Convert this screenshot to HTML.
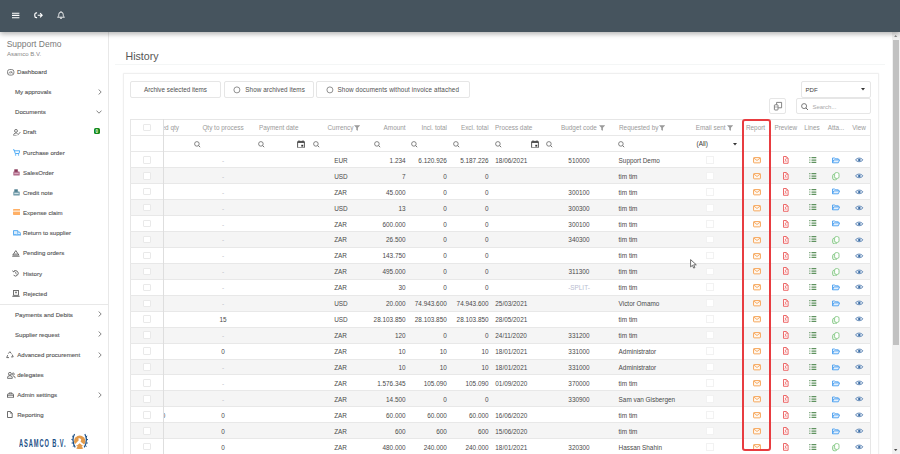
<!DOCTYPE html><html><head><meta charset="utf-8"><style>
html,body{margin:0;padding:0;width:900px;height:454px;overflow:hidden;background:#fff;font-family:"Liberation Sans", sans-serif;}
.t{position:absolute;white-space:nowrap;line-height:1;}
</style></head><body>
<div class="t" style="left:125.50px;top:51.03px;font-size:10.6px;color:#555;font-weight:normal;">History</div>
<div style="position:absolute;left:115px;top:64px;width:770px;height:1px;background:#f4f6f6"></div>
<div style="position:absolute;left:122.5px;top:73px;width:756px;height:400px;background:#fff;border:1px solid #efefef;border-radius:1px;box-sizing:border-box;box-shadow:0 0 1.5px rgba(0,0,0,0.07)"></div>
<div style="position:absolute;left:130px;top:81px;width:91px;height:17px;border:1px solid #e6e6e6;border-radius:2px;box-sizing:border-box;background:#fff"></div>
<div class="t" style="left:25.50px;width:300px;text-align:center;top:87.47px;font-size:6.3px;color:#505050;font-weight:normal;">Archive selected items</div>
<div style="position:absolute;left:223.5px;top:81px;width:90.0px;height:17px;border:1px solid #e6e6e6;border-radius:2px;box-sizing:border-box;background:#fff"></div>
<svg style="position:absolute;left:232.6px;top:85.8px" width="8" height="8" viewBox="0 0 8 8"><circle cx="3.9" cy="3.9" r="3" fill="none" stroke="#8a8a8a" stroke-width="0.95"/></svg>
<div class="t" style="left:245.30px;top:87.47px;font-size:6.3px;color:#505050;font-weight:normal;letter-spacing:0.08px">Show archived items</div>
<div style="position:absolute;left:316px;top:81px;width:153.5px;height:17px;border:1px solid #e6e6e6;border-radius:2px;box-sizing:border-box;background:#fff"></div>
<svg style="position:absolute;left:325.6px;top:85.8px" width="8" height="8" viewBox="0 0 8 8"><circle cx="3.9" cy="3.9" r="3" fill="none" stroke="#8a8a8a" stroke-width="0.95"/></svg>
<div class="t" style="left:337.50px;top:87.47px;font-size:6.3px;color:#505050;font-weight:normal;letter-spacing:0.11px">Show documents without invoice attached</div>
<div style="position:absolute;left:800.5px;top:81px;width:70.0px;height:16.5px;border:1px solid #e6e6e6;border-radius:2px;box-sizing:border-box;background:#fff"></div>
<div class="t" style="left:805.50px;top:86.84px;font-size:6.1px;color:#444;font-weight:normal;">PDF</div>
<svg style="position:absolute;left:861px;top:88.3px" width="4" height="3" viewBox="0 0 4 3"><path d="M0 0H4L2 2.4Z" fill="#333"/></svg>
<div style="position:absolute;left:769.4px;top:98.3px;width:17.0px;height:16.200000000000003px;border:1px solid #e6e6e6;border-radius:2px;box-sizing:border-box;background:#fff"></div>
<svg style="position:absolute;left:773px;top:101px" width="10" height="10" viewBox="0 0 10 10"><rect x="1.4" y="3.8" width="3.6" height="5.2" rx="0.6" fill="none" stroke="#666" stroke-width="0.8"/><path d="M3.6 3.6V1.4H8.6V6.8H5.2" fill="none" stroke="#666" stroke-width="0.8"/><path d="M1.6 6H4.8" stroke="#777" stroke-width="0.6"/></svg>
<div style="position:absolute;left:796px;top:98.2px;width:74.5px;height:16.099999999999994px;border:1px solid #e6e6e6;border-radius:2px;box-sizing:border-box;background:#fff"></div>
<svg style="position:absolute;left:800.5px;top:102.6px" width="8" height="8" viewBox="0 0 8 8"><circle cx="3.1" cy="3.1" r="2.5" fill="none" stroke="#666" stroke-width="0.85"/><path d="M4.9 4.9L7 7" stroke="#666" stroke-width="0.95"/></svg>
<div class="t" style="left:812.40px;top:103.92px;font-size:6.0px;color:#aaa;font-weight:normal;">Search...</div>
<div style="position:absolute;left:130px;top:119px;width:740.5px;height:335px;border:1px solid #e6e6e6;border-bottom:none;box-sizing:border-box;background:#fff"></div>
<div style="position:absolute;left:130px;top:135.3px;width:740.5px;height:1px;background:#e8e8e8"></div>
<div style="position:absolute;left:130px;top:151.3px;width:740.5px;height:1px;background:#e8e8e8"></div>
<div style="position:absolute;left:130px;top:167.24px;width:740.5px;height:1px;background:#e8e8e8"></div>
<div style="position:absolute;left:131px;top:168.24px;width:738.5px;height:14.94px;background:#f5f5f5"></div>
<div style="position:absolute;left:130px;top:183.18px;width:740.5px;height:1px;background:#e8e8e8"></div>
<div style="position:absolute;left:130px;top:199.12px;width:740.5px;height:1px;background:#e8e8e8"></div>
<div style="position:absolute;left:131px;top:200.12px;width:738.5px;height:14.94px;background:#f5f5f5"></div>
<div style="position:absolute;left:130px;top:215.06px;width:740.5px;height:1px;background:#e8e8e8"></div>
<div style="position:absolute;left:130px;top:231.0px;width:740.5px;height:1px;background:#e8e8e8"></div>
<div style="position:absolute;left:131px;top:232.0px;width:738.5px;height:14.94px;background:#f5f5f5"></div>
<div style="position:absolute;left:130px;top:246.94px;width:740.5px;height:1px;background:#e8e8e8"></div>
<div style="position:absolute;left:130px;top:262.88px;width:740.5px;height:1px;background:#e8e8e8"></div>
<div style="position:absolute;left:131px;top:263.88px;width:738.5px;height:14.94px;background:#f5f5f5"></div>
<div style="position:absolute;left:130px;top:278.82px;width:740.5px;height:1px;background:#e8e8e8"></div>
<div style="position:absolute;left:130px;top:294.76px;width:740.5px;height:1px;background:#e8e8e8"></div>
<div style="position:absolute;left:131px;top:295.76px;width:738.5px;height:14.94px;background:#f5f5f5"></div>
<div style="position:absolute;left:130px;top:310.7px;width:740.5px;height:1px;background:#e8e8e8"></div>
<div style="position:absolute;left:130px;top:326.64000000000004px;width:740.5px;height:1px;background:#e8e8e8"></div>
<div style="position:absolute;left:131px;top:327.64px;width:738.5px;height:14.94px;background:#f5f5f5"></div>
<div style="position:absolute;left:130px;top:342.58px;width:740.5px;height:1px;background:#e8e8e8"></div>
<div style="position:absolute;left:130px;top:358.52000000000004px;width:740.5px;height:1px;background:#e8e8e8"></div>
<div style="position:absolute;left:131px;top:359.52px;width:738.5px;height:14.94px;background:#f5f5f5"></div>
<div style="position:absolute;left:130px;top:374.46px;width:740.5px;height:1px;background:#e8e8e8"></div>
<div style="position:absolute;left:130px;top:390.40000000000003px;width:740.5px;height:1px;background:#e8e8e8"></div>
<div style="position:absolute;left:131px;top:391.4px;width:738.5px;height:14.94px;background:#f5f5f5"></div>
<div style="position:absolute;left:130px;top:406.34px;width:740.5px;height:1px;background:#e8e8e8"></div>
<div style="position:absolute;left:130px;top:422.28000000000003px;width:740.5px;height:1px;background:#e8e8e8"></div>
<div style="position:absolute;left:131px;top:423.28000000000003px;width:738.5px;height:14.94px;background:#f5f5f5"></div>
<div style="position:absolute;left:130px;top:438.22px;width:740.5px;height:1px;background:#e8e8e8"></div>
<div style="position:absolute;left:130px;top:454.16px;width:740.5px;height:1px;background:#e8e8e8"></div>
<div style="position:absolute;left:163px;top:119px;width:1px;height:335px;background:#dedede"></div>
<div style="position:absolute;left:143px;top:123.5px;width:7.5px;height:7.5px;border:1px solid #e9e9e9;border-radius:1px;box-sizing:border-box;background:#fff"></div>
<div style="position:absolute;left:164px;top:125.28px;width:20px;overflow:hidden;height:8px"><div class="t" style="left:-2.5px;top:0;font-size:6.4px;color:#9a9a9a">ed qty</div></div>
<div class="t" style="left:73.00px;width:300px;text-align:center;top:125.28px;font-size:6.4px;color:#9a9a9a;font-weight:normal;">Qty to process</div>
<div class="t" style="left:259.00px;top:125.28px;font-size:6.4px;color:#9a9a9a;font-weight:normal;">Payment date</div>
<div class="t" style="left:327.50px;top:125.28px;font-size:6.4px;color:#9a9a9a;font-weight:normal;">Currency</div>
<svg style="position:absolute;left:354.3px;top:125px" width="6" height="6" viewBox="0 0 6 6"><path d="M0 0.3H6.2L3.9 2.8V5.8L2.3 5V2.8Z" fill="#9a9a9a"/></svg>
<div class="t" style="left:105.60px;width:300px;text-align:right;top:125.28px;font-size:6.4px;color:#9a9a9a;font-weight:normal;">Amount</div>
<div class="t" style="left:147.00px;width:300px;text-align:right;top:125.28px;font-size:6.4px;color:#9a9a9a;font-weight:normal;">Incl. total</div>
<div class="t" style="left:188.60px;width:300px;text-align:right;top:125.28px;font-size:6.4px;color:#9a9a9a;font-weight:normal;">Excl. total</div>
<div class="t" style="left:495.00px;top:125.28px;font-size:6.4px;color:#9a9a9a;font-weight:normal;">Process date</div>
<div class="t" style="left:561.00px;top:125.28px;font-size:6.4px;color:#9a9a9a;font-weight:normal;">Budget code</div>
<svg style="position:absolute;left:598.8px;top:125px" width="6" height="6" viewBox="0 0 6 6"><path d="M0 0.3H6.2L3.9 2.8V5.8L2.3 5V2.8Z" fill="#9a9a9a"/></svg>
<div class="t" style="left:619.00px;top:125.28px;font-size:6.4px;color:#9a9a9a;font-weight:normal;">Requested by</div>
<svg style="position:absolute;left:658.8px;top:125px" width="6" height="6" viewBox="0 0 6 6"><path d="M0 0.3H6.2L3.9 2.8V5.8L2.3 5V2.8Z" fill="#9a9a9a"/></svg>
<div class="t" style="left:695.70px;top:125.28px;font-size:6.4px;color:#9a9a9a;font-weight:normal;">Email sent</div>
<svg style="position:absolute;left:727.3px;top:125px" width="6" height="6" viewBox="0 0 6 6"><path d="M0 0.3H6.2L3.9 2.8V5.8L2.3 5V2.8Z" fill="#9a9a9a"/></svg>
<div class="t" style="left:605.50px;width:300px;text-align:center;top:125.28px;font-size:6.4px;color:#9a9a9a;font-weight:normal;">Report</div>
<div class="t" style="left:635.80px;width:300px;text-align:center;top:125.28px;font-size:6.4px;color:#9a9a9a;font-weight:normal;">Preview</div>
<div class="t" style="left:662.00px;width:300px;text-align:center;top:125.28px;font-size:6.4px;color:#9a9a9a;font-weight:normal;">Lines</div>
<div class="t" style="left:686.00px;width:300px;text-align:center;top:125.28px;font-size:6.4px;color:#9a9a9a;font-weight:normal;">Atta...</div>
<div class="t" style="left:709.00px;width:300px;text-align:center;top:125.28px;font-size:6.4px;color:#9a9a9a;font-weight:normal;">View</div>
<svg style="position:absolute;left:193.5px;top:140.6px" width="7" height="7" viewBox="0 0 7 7"><circle cx="2.9" cy="2.9" r="2.3" fill="none" stroke="#666" stroke-width="0.8"/><path d="M4.6 4.6L6.2 6.2" stroke="#666" stroke-width="0.9"/></svg>
<svg style="position:absolute;left:258.0px;top:140.6px" width="7" height="7" viewBox="0 0 7 7"><circle cx="2.9" cy="2.9" r="2.3" fill="none" stroke="#666" stroke-width="0.8"/><path d="M4.6 4.6L6.2 6.2" stroke="#666" stroke-width="0.9"/></svg>
<svg style="position:absolute;left:297.1px;top:139.6px" width="8" height="8.5" viewBox="0 0 8 8.5"><rect x="0.6" y="1.4" width="6.8" height="6.5" rx="0.7" fill="none" stroke="#444" stroke-width="0.9"/><rect x="0.6" y="1.4" width="6.8" height="1.5" fill="#444"/><rect x="4.3" y="4.8" width="1.9" height="1.8" fill="#333"/><path d="M2 0.3V1.6M6 0.3V1.6" stroke="#444" stroke-width="0.8"/></svg>
<svg style="position:absolute;left:312.5px;top:140.6px" width="7" height="7" viewBox="0 0 7 7"><circle cx="2.9" cy="2.9" r="2.3" fill="none" stroke="#666" stroke-width="0.8"/><path d="M4.6 4.6L6.2 6.2" stroke="#666" stroke-width="0.9"/></svg>
<svg style="position:absolute;left:373.5px;top:140.6px" width="7" height="7" viewBox="0 0 7 7"><circle cx="2.9" cy="2.9" r="2.3" fill="none" stroke="#666" stroke-width="0.8"/><path d="M4.6 4.6L6.2 6.2" stroke="#666" stroke-width="0.9"/></svg>
<svg style="position:absolute;left:411.0px;top:140.6px" width="7" height="7" viewBox="0 0 7 7"><circle cx="2.9" cy="2.9" r="2.3" fill="none" stroke="#666" stroke-width="0.8"/><path d="M4.6 4.6L6.2 6.2" stroke="#666" stroke-width="0.9"/></svg>
<svg style="position:absolute;left:452.5px;top:140.6px" width="7" height="7" viewBox="0 0 7 7"><circle cx="2.9" cy="2.9" r="2.3" fill="none" stroke="#666" stroke-width="0.8"/><path d="M4.6 4.6L6.2 6.2" stroke="#666" stroke-width="0.9"/></svg>
<svg style="position:absolute;left:494.5px;top:140.6px" width="7" height="7" viewBox="0 0 7 7"><circle cx="2.9" cy="2.9" r="2.3" fill="none" stroke="#666" stroke-width="0.8"/><path d="M4.6 4.6L6.2 6.2" stroke="#666" stroke-width="0.9"/></svg>
<svg style="position:absolute;left:530.6px;top:139.6px" width="8" height="8.5" viewBox="0 0 8 8.5"><rect x="0.6" y="1.4" width="6.8" height="6.5" rx="0.7" fill="none" stroke="#444" stroke-width="0.9"/><rect x="0.6" y="1.4" width="6.8" height="1.5" fill="#444"/><rect x="4.3" y="4.8" width="1.9" height="1.8" fill="#333"/><path d="M2 0.3V1.6M6 0.3V1.6" stroke="#444" stroke-width="0.8"/></svg>
<svg style="position:absolute;left:545.5px;top:140.6px" width="7" height="7" viewBox="0 0 7 7"><circle cx="2.9" cy="2.9" r="2.3" fill="none" stroke="#666" stroke-width="0.8"/><path d="M4.6 4.6L6.2 6.2" stroke="#666" stroke-width="0.9"/></svg>
<svg style="position:absolute;left:617.5px;top:140.6px" width="7" height="7" viewBox="0 0 7 7"><circle cx="2.9" cy="2.9" r="2.3" fill="none" stroke="#666" stroke-width="0.8"/><path d="M4.6 4.6L6.2 6.2" stroke="#666" stroke-width="0.9"/></svg>
<div class="t" style="left:696.50px;top:141.08px;font-size:6.4px;color:#333;font-weight:normal;">(All)</div>
<svg style="position:absolute;left:733px;top:142.8px" width="4" height="3" viewBox="0 0 4 3"><path d="M0 0H4L2 2.4Z" fill="#333"/></svg>
<div style="position:absolute;left:143px;top:156.07px;width:7.5px;height:7.5px;border:1px solid #e9e9e9;border-radius:1px;box-sizing:border-box;background:#fff"></div>
<div class="t" style="left:73.00px;width:300px;text-align:center;top:157.78px;font-size:6.4px;color:#c0c0c8;font-weight:normal;">-</div>
<div class="t" style="left:334.20px;top:157.78px;font-size:6.4px;color:#4a4a4a;font-weight:normal;">EUR</div>
<div class="t" style="left:105.60px;width:300px;text-align:right;top:157.78px;font-size:6.4px;color:#4a4a4a;font-weight:normal;">1.234</div>
<div class="t" style="left:146.80px;width:300px;text-align:right;top:157.78px;font-size:6.4px;color:#4a4a4a;font-weight:normal;">6.120.926</div>
<div class="t" style="left:188.60px;width:300px;text-align:right;top:157.78px;font-size:6.4px;color:#4a4a4a;font-weight:normal;">5.187.226</div>
<div class="t" style="left:495.30px;top:157.78px;font-size:6.4px;color:#4a4a4a;font-weight:normal;">18/06/2021</div>
<div class="t" style="left:429.00px;width:300px;text-align:center;top:157.78px;font-size:6.4px;color:#4a4a4a;font-weight:normal;">510000</div>
<div class="t" style="left:618.60px;top:157.78px;font-size:6.4px;color:#4a4a4a;font-weight:normal;">Support Demo</div>
<div style="position:absolute;left:706px;top:155.97px;width:7.8px;height:7.8px;border:1px solid #f2f2f2;box-sizing:border-box;background:#fff"></div>
<svg style="position:absolute;left:752.5px;top:156.87px" width="8" height="7" viewBox="0 0 8 7"><rect x="0.55" y="0.55" width="6.9" height="5.3" rx="0.6" fill="#fff8f0" stroke="#f6a456" stroke-width="0.95"/><path d="M0.9 1.1L4 3.5L7.1 1.1" fill="none" stroke="#f6a456" stroke-width="0.9"/></svg>
<svg style="position:absolute;left:782.5px;top:155.87px" width="6" height="8" viewBox="0 0 6 8"><path d="M0.5 0.5H3.3L5.1 2.3V7.3H0.5Z" fill="#fff" stroke="#ea5050" stroke-width="0.85" stroke-linejoin="round"/><path d="M3.2 0.6V2.4H5" fill="none" stroke="#ea5050" stroke-width="0.6"/><path d="M1.8 6C2.4 4.8 2.8 3.8 2.7 3.1C2.6 2.7 2.1 2.9 2.3 3.6C2.6 4.6 3.4 5.4 4 5.5" fill="none" stroke="#ea5050" stroke-width="0.55"/></svg>
<svg style="position:absolute;left:808.6px;top:157px" width="8" height="7" viewBox="0 0 8 7"><path d="M0.3 0.6H1.4M0.3 3H1.4M0.3 5.4H1.4" stroke="#5a8f5a" stroke-width="1.2"/><path d="M2.5 0.6H7.3M2.5 3H7.3M2.5 5.4H7.3" stroke="#5f925f" stroke-width="1.25"/></svg>
<svg style="position:absolute;left:831.5px;top:156.57px" width="8" height="7" viewBox="0 0 8 7"><path d="M0.5 5.8V1H2.8L3.6 1.8H6.3V2.8" fill="none" stroke="#4a9ff0" stroke-width="0.9"/><path d="M0.5 5.8L1.8 2.9H7.6L6.3 5.8Z" fill="#e3f0fd" stroke="#4a9ff0" stroke-width="0.9"/></svg>
<svg style="position:absolute;left:854.7px;top:156.97px" width="9" height="6" viewBox="0 0 9 6"><path d="M0.5 2.9C2.1 0.5 6.3 0.5 7.9 2.9C6.3 5.3 2.1 5.3 0.5 2.9Z" fill="#e8eef6" stroke="#4573aa" stroke-width="0.8"/><circle cx="4.3" cy="2.9" r="1.25" fill="#3f6fa6"/></svg>
<div style="position:absolute;left:143px;top:172.01px;width:7.5px;height:7.5px;border:1px solid #e9e9e9;border-radius:1px;box-sizing:border-box;background:#fff"></div>
<div class="t" style="left:73.00px;width:300px;text-align:center;top:173.72px;font-size:6.4px;color:#c0c0c8;font-weight:normal;">-</div>
<div class="t" style="left:334.20px;top:173.72px;font-size:6.4px;color:#4a4a4a;font-weight:normal;">USD</div>
<div class="t" style="left:105.60px;width:300px;text-align:right;top:173.72px;font-size:6.4px;color:#4a4a4a;font-weight:normal;">7</div>
<div class="t" style="left:146.80px;width:300px;text-align:right;top:173.72px;font-size:6.4px;color:#4a4a4a;font-weight:normal;">0</div>
<div class="t" style="left:188.60px;width:300px;text-align:right;top:173.72px;font-size:6.4px;color:#4a4a4a;font-weight:normal;">0</div>
<div class="t" style="left:618.60px;top:173.72px;font-size:6.4px;color:#4a4a4a;font-weight:normal;">tim tim</div>
<div style="position:absolute;left:706px;top:171.91px;width:7.8px;height:7.8px;border:1px solid #f2f2f2;box-sizing:border-box;background:#fff"></div>
<svg style="position:absolute;left:752.5px;top:172.81px" width="8" height="7" viewBox="0 0 8 7"><rect x="0.55" y="0.55" width="6.9" height="5.3" rx="0.6" fill="#fff8f0" stroke="#f6a456" stroke-width="0.95"/><path d="M0.9 1.1L4 3.5L7.1 1.1" fill="none" stroke="#f6a456" stroke-width="0.9"/></svg>
<svg style="position:absolute;left:782.5px;top:171.81px" width="6" height="8" viewBox="0 0 6 8"><path d="M0.5 0.5H3.3L5.1 2.3V7.3H0.5Z" fill="#fff" stroke="#ea5050" stroke-width="0.85" stroke-linejoin="round"/><path d="M3.2 0.6V2.4H5" fill="none" stroke="#ea5050" stroke-width="0.6"/><path d="M1.8 6C2.4 4.8 2.8 3.8 2.7 3.1C2.6 2.7 2.1 2.9 2.3 3.6C2.6 4.6 3.4 5.4 4 5.5" fill="none" stroke="#ea5050" stroke-width="0.55"/></svg>
<svg style="position:absolute;left:808.6px;top:173px" width="8" height="7" viewBox="0 0 8 7"><path d="M0.3 0.6H1.4M0.3 3H1.4M0.3 5.4H1.4" stroke="#5a8f5a" stroke-width="1.2"/><path d="M2.5 0.6H7.3M2.5 3H7.3M2.5 5.4H7.3" stroke="#5f925f" stroke-width="1.25"/></svg>
<svg style="position:absolute;left:831.5px;top:172.11px" width="8" height="8.5" viewBox="0 0 8 8.5"><rect x="0.6" y="2.2" width="4.4" height="5.6" rx="1.6" fill="#e6f4e6" stroke="#86c886" stroke-width="0.9"/><rect x="2.6" y="0.6" width="4.4" height="5.8" rx="1.6" fill="#fff" stroke="#86c886" stroke-width="0.9"/></svg>
<svg style="position:absolute;left:854.7px;top:172.91px" width="9" height="6" viewBox="0 0 9 6"><path d="M0.5 2.9C2.1 0.5 6.3 0.5 7.9 2.9C6.3 5.3 2.1 5.3 0.5 2.9Z" fill="#e8eef6" stroke="#4573aa" stroke-width="0.8"/><circle cx="4.3" cy="2.9" r="1.25" fill="#3f6fa6"/></svg>
<div style="position:absolute;left:143px;top:187.95px;width:7.5px;height:7.5px;border:1px solid #e9e9e9;border-radius:1px;box-sizing:border-box;background:#fff"></div>
<div class="t" style="left:73.00px;width:300px;text-align:center;top:189.66px;font-size:6.4px;color:#c0c0c8;font-weight:normal;">-</div>
<div class="t" style="left:334.20px;top:189.66px;font-size:6.4px;color:#4a4a4a;font-weight:normal;">ZAR</div>
<div class="t" style="left:105.60px;width:300px;text-align:right;top:189.66px;font-size:6.4px;color:#4a4a4a;font-weight:normal;">45.000</div>
<div class="t" style="left:146.80px;width:300px;text-align:right;top:189.66px;font-size:6.4px;color:#4a4a4a;font-weight:normal;">0</div>
<div class="t" style="left:188.60px;width:300px;text-align:right;top:189.66px;font-size:6.4px;color:#4a4a4a;font-weight:normal;">0</div>
<div class="t" style="left:429.00px;width:300px;text-align:center;top:189.66px;font-size:6.4px;color:#4a4a4a;font-weight:normal;">300100</div>
<div class="t" style="left:618.60px;top:189.66px;font-size:6.4px;color:#4a4a4a;font-weight:normal;">tim tim</div>
<div style="position:absolute;left:706px;top:187.85px;width:7.8px;height:7.8px;border:1px solid #f2f2f2;box-sizing:border-box;background:#fff"></div>
<svg style="position:absolute;left:752.5px;top:188.75px" width="8" height="7" viewBox="0 0 8 7"><rect x="0.55" y="0.55" width="6.9" height="5.3" rx="0.6" fill="#fff8f0" stroke="#f6a456" stroke-width="0.95"/><path d="M0.9 1.1L4 3.5L7.1 1.1" fill="none" stroke="#f6a456" stroke-width="0.9"/></svg>
<svg style="position:absolute;left:782.5px;top:187.75px" width="6" height="8" viewBox="0 0 6 8"><path d="M0.5 0.5H3.3L5.1 2.3V7.3H0.5Z" fill="#fff" stroke="#ea5050" stroke-width="0.85" stroke-linejoin="round"/><path d="M3.2 0.6V2.4H5" fill="none" stroke="#ea5050" stroke-width="0.6"/><path d="M1.8 6C2.4 4.8 2.8 3.8 2.7 3.1C2.6 2.7 2.1 2.9 2.3 3.6C2.6 4.6 3.4 5.4 4 5.5" fill="none" stroke="#ea5050" stroke-width="0.55"/></svg>
<svg style="position:absolute;left:808.6px;top:189px" width="8" height="7" viewBox="0 0 8 7"><path d="M0.3 0.6H1.4M0.3 3H1.4M0.3 5.4H1.4" stroke="#5a8f5a" stroke-width="1.2"/><path d="M2.5 0.6H7.3M2.5 3H7.3M2.5 5.4H7.3" stroke="#5f925f" stroke-width="1.25"/></svg>
<svg style="position:absolute;left:831.5px;top:188.45px" width="8" height="7" viewBox="0 0 8 7"><path d="M0.5 5.8V1H2.8L3.6 1.8H6.3V2.8" fill="none" stroke="#4a9ff0" stroke-width="0.9"/><path d="M0.5 5.8L1.8 2.9H7.6L6.3 5.8Z" fill="#e3f0fd" stroke="#4a9ff0" stroke-width="0.9"/></svg>
<svg style="position:absolute;left:854.7px;top:188.85px" width="9" height="6" viewBox="0 0 9 6"><path d="M0.5 2.9C2.1 0.5 6.3 0.5 7.9 2.9C6.3 5.3 2.1 5.3 0.5 2.9Z" fill="#e8eef6" stroke="#4573aa" stroke-width="0.8"/><circle cx="4.3" cy="2.9" r="1.25" fill="#3f6fa6"/></svg>
<div style="position:absolute;left:143px;top:203.89px;width:7.5px;height:7.5px;border:1px solid #e9e9e9;border-radius:1px;box-sizing:border-box;background:#fff"></div>
<div class="t" style="left:73.00px;width:300px;text-align:center;top:205.60px;font-size:6.4px;color:#c0c0c8;font-weight:normal;">-</div>
<div class="t" style="left:334.20px;top:205.60px;font-size:6.4px;color:#4a4a4a;font-weight:normal;">USD</div>
<div class="t" style="left:105.60px;width:300px;text-align:right;top:205.60px;font-size:6.4px;color:#4a4a4a;font-weight:normal;">13</div>
<div class="t" style="left:146.80px;width:300px;text-align:right;top:205.60px;font-size:6.4px;color:#4a4a4a;font-weight:normal;">0</div>
<div class="t" style="left:188.60px;width:300px;text-align:right;top:205.60px;font-size:6.4px;color:#4a4a4a;font-weight:normal;">0</div>
<div class="t" style="left:429.00px;width:300px;text-align:center;top:205.60px;font-size:6.4px;color:#4a4a4a;font-weight:normal;">300300</div>
<div class="t" style="left:618.60px;top:205.60px;font-size:6.4px;color:#4a4a4a;font-weight:normal;">tim tim</div>
<div style="position:absolute;left:706px;top:203.79px;width:7.8px;height:7.8px;border:1px solid #f2f2f2;box-sizing:border-box;background:#fff"></div>
<svg style="position:absolute;left:752.5px;top:204.69px" width="8" height="7" viewBox="0 0 8 7"><rect x="0.55" y="0.55" width="6.9" height="5.3" rx="0.6" fill="#fff8f0" stroke="#f6a456" stroke-width="0.95"/><path d="M0.9 1.1L4 3.5L7.1 1.1" fill="none" stroke="#f6a456" stroke-width="0.9"/></svg>
<svg style="position:absolute;left:782.5px;top:203.69px" width="6" height="8" viewBox="0 0 6 8"><path d="M0.5 0.5H3.3L5.1 2.3V7.3H0.5Z" fill="#fff" stroke="#ea5050" stroke-width="0.85" stroke-linejoin="round"/><path d="M3.2 0.6V2.4H5" fill="none" stroke="#ea5050" stroke-width="0.6"/><path d="M1.8 6C2.4 4.8 2.8 3.8 2.7 3.1C2.6 2.7 2.1 2.9 2.3 3.6C2.6 4.6 3.4 5.4 4 5.5" fill="none" stroke="#ea5050" stroke-width="0.55"/></svg>
<svg style="position:absolute;left:808.6px;top:204px" width="8" height="7" viewBox="0 0 8 7"><path d="M0.3 0.6H1.4M0.3 3H1.4M0.3 5.4H1.4" stroke="#5a8f5a" stroke-width="1.2"/><path d="M2.5 0.6H7.3M2.5 3H7.3M2.5 5.4H7.3" stroke="#5f925f" stroke-width="1.25"/></svg>
<svg style="position:absolute;left:831.5px;top:204.39px" width="8" height="7" viewBox="0 0 8 7"><path d="M0.5 5.8V1H2.8L3.6 1.8H6.3V2.8" fill="none" stroke="#4a9ff0" stroke-width="0.9"/><path d="M0.5 5.8L1.8 2.9H7.6L6.3 5.8Z" fill="#e3f0fd" stroke="#4a9ff0" stroke-width="0.9"/></svg>
<svg style="position:absolute;left:854.7px;top:204.79px" width="9" height="6" viewBox="0 0 9 6"><path d="M0.5 2.9C2.1 0.5 6.3 0.5 7.9 2.9C6.3 5.3 2.1 5.3 0.5 2.9Z" fill="#e8eef6" stroke="#4573aa" stroke-width="0.8"/><circle cx="4.3" cy="2.9" r="1.25" fill="#3f6fa6"/></svg>
<div style="position:absolute;left:143px;top:219.83px;width:7.5px;height:7.5px;border:1px solid #e9e9e9;border-radius:1px;box-sizing:border-box;background:#fff"></div>
<div class="t" style="left:73.00px;width:300px;text-align:center;top:221.54px;font-size:6.4px;color:#c0c0c8;font-weight:normal;">-</div>
<div class="t" style="left:334.20px;top:221.54px;font-size:6.4px;color:#4a4a4a;font-weight:normal;">ZAR</div>
<div class="t" style="left:105.60px;width:300px;text-align:right;top:221.54px;font-size:6.4px;color:#4a4a4a;font-weight:normal;">600.000</div>
<div class="t" style="left:146.80px;width:300px;text-align:right;top:221.54px;font-size:6.4px;color:#4a4a4a;font-weight:normal;">0</div>
<div class="t" style="left:188.60px;width:300px;text-align:right;top:221.54px;font-size:6.4px;color:#4a4a4a;font-weight:normal;">0</div>
<div class="t" style="left:429.00px;width:300px;text-align:center;top:221.54px;font-size:6.4px;color:#4a4a4a;font-weight:normal;">300100</div>
<div class="t" style="left:618.60px;top:221.54px;font-size:6.4px;color:#4a4a4a;font-weight:normal;">tim tim</div>
<div style="position:absolute;left:706px;top:219.73px;width:7.8px;height:7.8px;border:1px solid #f2f2f2;box-sizing:border-box;background:#fff"></div>
<svg style="position:absolute;left:752.5px;top:220.63px" width="8" height="7" viewBox="0 0 8 7"><rect x="0.55" y="0.55" width="6.9" height="5.3" rx="0.6" fill="#fff8f0" stroke="#f6a456" stroke-width="0.95"/><path d="M0.9 1.1L4 3.5L7.1 1.1" fill="none" stroke="#f6a456" stroke-width="0.9"/></svg>
<svg style="position:absolute;left:782.5px;top:219.63px" width="6" height="8" viewBox="0 0 6 8"><path d="M0.5 0.5H3.3L5.1 2.3V7.3H0.5Z" fill="#fff" stroke="#ea5050" stroke-width="0.85" stroke-linejoin="round"/><path d="M3.2 0.6V2.4H5" fill="none" stroke="#ea5050" stroke-width="0.6"/><path d="M1.8 6C2.4 4.8 2.8 3.8 2.7 3.1C2.6 2.7 2.1 2.9 2.3 3.6C2.6 4.6 3.4 5.4 4 5.5" fill="none" stroke="#ea5050" stroke-width="0.55"/></svg>
<svg style="position:absolute;left:808.6px;top:220px" width="8" height="7" viewBox="0 0 8 7"><path d="M0.3 0.6H1.4M0.3 3H1.4M0.3 5.4H1.4" stroke="#5a8f5a" stroke-width="1.2"/><path d="M2.5 0.6H7.3M2.5 3H7.3M2.5 5.4H7.3" stroke="#5f925f" stroke-width="1.25"/></svg>
<svg style="position:absolute;left:831.5px;top:220.33px" width="8" height="7" viewBox="0 0 8 7"><path d="M0.5 5.8V1H2.8L3.6 1.8H6.3V2.8" fill="none" stroke="#4a9ff0" stroke-width="0.9"/><path d="M0.5 5.8L1.8 2.9H7.6L6.3 5.8Z" fill="#e3f0fd" stroke="#4a9ff0" stroke-width="0.9"/></svg>
<svg style="position:absolute;left:854.7px;top:220.73px" width="9" height="6" viewBox="0 0 9 6"><path d="M0.5 2.9C2.1 0.5 6.3 0.5 7.9 2.9C6.3 5.3 2.1 5.3 0.5 2.9Z" fill="#e8eef6" stroke="#4573aa" stroke-width="0.8"/><circle cx="4.3" cy="2.9" r="1.25" fill="#3f6fa6"/></svg>
<div style="position:absolute;left:143px;top:235.77px;width:7.5px;height:7.5px;border:1px solid #e9e9e9;border-radius:1px;box-sizing:border-box;background:#fff"></div>
<div class="t" style="left:73.00px;width:300px;text-align:center;top:237.48px;font-size:6.4px;color:#c0c0c8;font-weight:normal;">-</div>
<div class="t" style="left:334.20px;top:237.48px;font-size:6.4px;color:#4a4a4a;font-weight:normal;">ZAR</div>
<div class="t" style="left:105.60px;width:300px;text-align:right;top:237.48px;font-size:6.4px;color:#4a4a4a;font-weight:normal;">26.500</div>
<div class="t" style="left:146.80px;width:300px;text-align:right;top:237.48px;font-size:6.4px;color:#4a4a4a;font-weight:normal;">0</div>
<div class="t" style="left:188.60px;width:300px;text-align:right;top:237.48px;font-size:6.4px;color:#4a4a4a;font-weight:normal;">0</div>
<div class="t" style="left:429.00px;width:300px;text-align:center;top:237.48px;font-size:6.4px;color:#4a4a4a;font-weight:normal;">340300</div>
<div class="t" style="left:618.60px;top:237.48px;font-size:6.4px;color:#4a4a4a;font-weight:normal;">tim tim</div>
<div style="position:absolute;left:706px;top:235.67px;width:7.8px;height:7.8px;border:1px solid #f2f2f2;box-sizing:border-box;background:#fff"></div>
<svg style="position:absolute;left:752.5px;top:236.57px" width="8" height="7" viewBox="0 0 8 7"><rect x="0.55" y="0.55" width="6.9" height="5.3" rx="0.6" fill="#fff8f0" stroke="#f6a456" stroke-width="0.95"/><path d="M0.9 1.1L4 3.5L7.1 1.1" fill="none" stroke="#f6a456" stroke-width="0.9"/></svg>
<svg style="position:absolute;left:782.5px;top:235.57px" width="6" height="8" viewBox="0 0 6 8"><path d="M0.5 0.5H3.3L5.1 2.3V7.3H0.5Z" fill="#fff" stroke="#ea5050" stroke-width="0.85" stroke-linejoin="round"/><path d="M3.2 0.6V2.4H5" fill="none" stroke="#ea5050" stroke-width="0.6"/><path d="M1.8 6C2.4 4.8 2.8 3.8 2.7 3.1C2.6 2.7 2.1 2.9 2.3 3.6C2.6 4.6 3.4 5.4 4 5.5" fill="none" stroke="#ea5050" stroke-width="0.55"/></svg>
<svg style="position:absolute;left:808.6px;top:236px" width="8" height="7" viewBox="0 0 8 7"><path d="M0.3 0.6H1.4M0.3 3H1.4M0.3 5.4H1.4" stroke="#5a8f5a" stroke-width="1.2"/><path d="M2.5 0.6H7.3M2.5 3H7.3M2.5 5.4H7.3" stroke="#5f925f" stroke-width="1.25"/></svg>
<svg style="position:absolute;left:831.5px;top:235.87px" width="8" height="8.5" viewBox="0 0 8 8.5"><rect x="0.6" y="2.2" width="4.4" height="5.6" rx="1.6" fill="#e6f4e6" stroke="#86c886" stroke-width="0.9"/><rect x="2.6" y="0.6" width="4.4" height="5.8" rx="1.6" fill="#fff" stroke="#86c886" stroke-width="0.9"/></svg>
<svg style="position:absolute;left:854.7px;top:236.67px" width="9" height="6" viewBox="0 0 9 6"><path d="M0.5 2.9C2.1 0.5 6.3 0.5 7.9 2.9C6.3 5.3 2.1 5.3 0.5 2.9Z" fill="#e8eef6" stroke="#4573aa" stroke-width="0.8"/><circle cx="4.3" cy="2.9" r="1.25" fill="#3f6fa6"/></svg>
<div style="position:absolute;left:143px;top:251.71px;width:7.5px;height:7.5px;border:1px solid #e9e9e9;border-radius:1px;box-sizing:border-box;background:#fff"></div>
<div class="t" style="left:73.00px;width:300px;text-align:center;top:253.42px;font-size:6.4px;color:#c0c0c8;font-weight:normal;">-</div>
<div class="t" style="left:334.20px;top:253.42px;font-size:6.4px;color:#4a4a4a;font-weight:normal;">ZAR</div>
<div class="t" style="left:105.60px;width:300px;text-align:right;top:253.42px;font-size:6.4px;color:#4a4a4a;font-weight:normal;">143.750</div>
<div class="t" style="left:146.80px;width:300px;text-align:right;top:253.42px;font-size:6.4px;color:#4a4a4a;font-weight:normal;">0</div>
<div class="t" style="left:188.60px;width:300px;text-align:right;top:253.42px;font-size:6.4px;color:#4a4a4a;font-weight:normal;">0</div>
<div class="t" style="left:618.60px;top:253.42px;font-size:6.4px;color:#4a4a4a;font-weight:normal;">tim tim</div>
<div style="position:absolute;left:706px;top:251.61px;width:7.8px;height:7.8px;border:1px solid #f2f2f2;box-sizing:border-box;background:#fff"></div>
<svg style="position:absolute;left:752.5px;top:252.51px" width="8" height="7" viewBox="0 0 8 7"><rect x="0.55" y="0.55" width="6.9" height="5.3" rx="0.6" fill="#fff8f0" stroke="#f6a456" stroke-width="0.95"/><path d="M0.9 1.1L4 3.5L7.1 1.1" fill="none" stroke="#f6a456" stroke-width="0.9"/></svg>
<svg style="position:absolute;left:782.5px;top:251.51px" width="6" height="8" viewBox="0 0 6 8"><path d="M0.5 0.5H3.3L5.1 2.3V7.3H0.5Z" fill="#fff" stroke="#ea5050" stroke-width="0.85" stroke-linejoin="round"/><path d="M3.2 0.6V2.4H5" fill="none" stroke="#ea5050" stroke-width="0.6"/><path d="M1.8 6C2.4 4.8 2.8 3.8 2.7 3.1C2.6 2.7 2.1 2.9 2.3 3.6C2.6 4.6 3.4 5.4 4 5.5" fill="none" stroke="#ea5050" stroke-width="0.55"/></svg>
<svg style="position:absolute;left:808.6px;top:252px" width="8" height="7" viewBox="0 0 8 7"><path d="M0.3 0.6H1.4M0.3 3H1.4M0.3 5.4H1.4" stroke="#5a8f5a" stroke-width="1.2"/><path d="M2.5 0.6H7.3M2.5 3H7.3M2.5 5.4H7.3" stroke="#5f925f" stroke-width="1.25"/></svg>
<svg style="position:absolute;left:831.5px;top:251.81px" width="8" height="8.5" viewBox="0 0 8 8.5"><rect x="0.6" y="2.2" width="4.4" height="5.6" rx="1.6" fill="#e6f4e6" stroke="#86c886" stroke-width="0.9"/><rect x="2.6" y="0.6" width="4.4" height="5.8" rx="1.6" fill="#fff" stroke="#86c886" stroke-width="0.9"/></svg>
<svg style="position:absolute;left:854.7px;top:252.61px" width="9" height="6" viewBox="0 0 9 6"><path d="M0.5 2.9C2.1 0.5 6.3 0.5 7.9 2.9C6.3 5.3 2.1 5.3 0.5 2.9Z" fill="#e8eef6" stroke="#4573aa" stroke-width="0.8"/><circle cx="4.3" cy="2.9" r="1.25" fill="#3f6fa6"/></svg>
<div style="position:absolute;left:143px;top:267.65px;width:7.5px;height:7.5px;border:1px solid #e9e9e9;border-radius:1px;box-sizing:border-box;background:#fff"></div>
<div class="t" style="left:73.00px;width:300px;text-align:center;top:269.36px;font-size:6.4px;color:#c0c0c8;font-weight:normal;">-</div>
<div class="t" style="left:334.20px;top:269.36px;font-size:6.4px;color:#4a4a4a;font-weight:normal;">ZAR</div>
<div class="t" style="left:105.60px;width:300px;text-align:right;top:269.36px;font-size:6.4px;color:#4a4a4a;font-weight:normal;">495.000</div>
<div class="t" style="left:146.80px;width:300px;text-align:right;top:269.36px;font-size:6.4px;color:#4a4a4a;font-weight:normal;">0</div>
<div class="t" style="left:188.60px;width:300px;text-align:right;top:269.36px;font-size:6.4px;color:#4a4a4a;font-weight:normal;">0</div>
<div class="t" style="left:429.00px;width:300px;text-align:center;top:269.36px;font-size:6.4px;color:#4a4a4a;font-weight:normal;">311300</div>
<div class="t" style="left:618.60px;top:269.36px;font-size:6.4px;color:#4a4a4a;font-weight:normal;">tim tim</div>
<div style="position:absolute;left:706px;top:267.55px;width:7.8px;height:7.8px;border:1px solid #f2f2f2;box-sizing:border-box;background:#fff"></div>
<svg style="position:absolute;left:752.5px;top:268.45px" width="8" height="7" viewBox="0 0 8 7"><rect x="0.55" y="0.55" width="6.9" height="5.3" rx="0.6" fill="#fff8f0" stroke="#f6a456" stroke-width="0.95"/><path d="M0.9 1.1L4 3.5L7.1 1.1" fill="none" stroke="#f6a456" stroke-width="0.9"/></svg>
<svg style="position:absolute;left:782.5px;top:267.45px" width="6" height="8" viewBox="0 0 6 8"><path d="M0.5 0.5H3.3L5.1 2.3V7.3H0.5Z" fill="#fff" stroke="#ea5050" stroke-width="0.85" stroke-linejoin="round"/><path d="M3.2 0.6V2.4H5" fill="none" stroke="#ea5050" stroke-width="0.6"/><path d="M1.8 6C2.4 4.8 2.8 3.8 2.7 3.1C2.6 2.7 2.1 2.9 2.3 3.6C2.6 4.6 3.4 5.4 4 5.5" fill="none" stroke="#ea5050" stroke-width="0.55"/></svg>
<svg style="position:absolute;left:808.6px;top:268px" width="8" height="7" viewBox="0 0 8 7"><path d="M0.3 0.6H1.4M0.3 3H1.4M0.3 5.4H1.4" stroke="#5a8f5a" stroke-width="1.2"/><path d="M2.5 0.6H7.3M2.5 3H7.3M2.5 5.4H7.3" stroke="#5f925f" stroke-width="1.25"/></svg>
<svg style="position:absolute;left:831.5px;top:267.75px" width="8" height="8.5" viewBox="0 0 8 8.5"><rect x="0.6" y="2.2" width="4.4" height="5.6" rx="1.6" fill="#e6f4e6" stroke="#86c886" stroke-width="0.9"/><rect x="2.6" y="0.6" width="4.4" height="5.8" rx="1.6" fill="#fff" stroke="#86c886" stroke-width="0.9"/></svg>
<svg style="position:absolute;left:854.7px;top:268.55px" width="9" height="6" viewBox="0 0 9 6"><path d="M0.5 2.9C2.1 0.5 6.3 0.5 7.9 2.9C6.3 5.3 2.1 5.3 0.5 2.9Z" fill="#e8eef6" stroke="#4573aa" stroke-width="0.8"/><circle cx="4.3" cy="2.9" r="1.25" fill="#3f6fa6"/></svg>
<div style="position:absolute;left:143px;top:283.59px;width:7.5px;height:7.5px;border:1px solid #e9e9e9;border-radius:1px;box-sizing:border-box;background:#fff"></div>
<div class="t" style="left:73.00px;width:300px;text-align:center;top:285.30px;font-size:6.4px;color:#c0c0c8;font-weight:normal;">-</div>
<div class="t" style="left:334.20px;top:285.30px;font-size:6.4px;color:#4a4a4a;font-weight:normal;">ZAR</div>
<div class="t" style="left:105.60px;width:300px;text-align:right;top:285.30px;font-size:6.4px;color:#4a4a4a;font-weight:normal;">30</div>
<div class="t" style="left:146.80px;width:300px;text-align:right;top:285.30px;font-size:6.4px;color:#4a4a4a;font-weight:normal;">0</div>
<div class="t" style="left:188.60px;width:300px;text-align:right;top:285.30px;font-size:6.4px;color:#4a4a4a;font-weight:normal;">0</div>
<div class="t" style="left:429.00px;width:300px;text-align:center;top:285.30px;font-size:6.4px;color:#b8bcd0;font-weight:normal;">-SPLIT-</div>
<div class="t" style="left:618.60px;top:285.30px;font-size:6.4px;color:#4a4a4a;font-weight:normal;">tim tim</div>
<div style="position:absolute;left:706px;top:283.49px;width:7.8px;height:7.8px;border:1px solid #f2f2f2;box-sizing:border-box;background:#fff"></div>
<svg style="position:absolute;left:752.5px;top:284.39px" width="8" height="7" viewBox="0 0 8 7"><rect x="0.55" y="0.55" width="6.9" height="5.3" rx="0.6" fill="#fff8f0" stroke="#f6a456" stroke-width="0.95"/><path d="M0.9 1.1L4 3.5L7.1 1.1" fill="none" stroke="#f6a456" stroke-width="0.9"/></svg>
<svg style="position:absolute;left:782.5px;top:283.39px" width="6" height="8" viewBox="0 0 6 8"><path d="M0.5 0.5H3.3L5.1 2.3V7.3H0.5Z" fill="#fff" stroke="#ea5050" stroke-width="0.85" stroke-linejoin="round"/><path d="M3.2 0.6V2.4H5" fill="none" stroke="#ea5050" stroke-width="0.6"/><path d="M1.8 6C2.4 4.8 2.8 3.8 2.7 3.1C2.6 2.7 2.1 2.9 2.3 3.6C2.6 4.6 3.4 5.4 4 5.5" fill="none" stroke="#ea5050" stroke-width="0.55"/></svg>
<svg style="position:absolute;left:808.6px;top:284px" width="8" height="7" viewBox="0 0 8 7"><path d="M0.3 0.6H1.4M0.3 3H1.4M0.3 5.4H1.4" stroke="#5a8f5a" stroke-width="1.2"/><path d="M2.5 0.6H7.3M2.5 3H7.3M2.5 5.4H7.3" stroke="#5f925f" stroke-width="1.25"/></svg>
<svg style="position:absolute;left:831.5px;top:284.09px" width="8" height="7" viewBox="0 0 8 7"><path d="M0.5 5.8V1H2.8L3.6 1.8H6.3V2.8" fill="none" stroke="#4a9ff0" stroke-width="0.9"/><path d="M0.5 5.8L1.8 2.9H7.6L6.3 5.8Z" fill="#e3f0fd" stroke="#4a9ff0" stroke-width="0.9"/></svg>
<svg style="position:absolute;left:854.7px;top:284.49px" width="9" height="6" viewBox="0 0 9 6"><path d="M0.5 2.9C2.1 0.5 6.3 0.5 7.9 2.9C6.3 5.3 2.1 5.3 0.5 2.9Z" fill="#e8eef6" stroke="#4573aa" stroke-width="0.8"/><circle cx="4.3" cy="2.9" r="1.25" fill="#3f6fa6"/></svg>
<div style="position:absolute;left:143px;top:299.53px;width:7.5px;height:7.5px;border:1px solid #e9e9e9;border-radius:1px;box-sizing:border-box;background:#fff"></div>
<div class="t" style="left:73.00px;width:300px;text-align:center;top:301.24px;font-size:6.4px;color:#c0c0c8;font-weight:normal;">-</div>
<div class="t" style="left:334.20px;top:301.24px;font-size:6.4px;color:#4a4a4a;font-weight:normal;">USD</div>
<div class="t" style="left:105.60px;width:300px;text-align:right;top:301.24px;font-size:6.4px;color:#4a4a4a;font-weight:normal;">20.000</div>
<div class="t" style="left:146.80px;width:300px;text-align:right;top:301.24px;font-size:6.4px;color:#4a4a4a;font-weight:normal;">74.943.600</div>
<div class="t" style="left:188.60px;width:300px;text-align:right;top:301.24px;font-size:6.4px;color:#4a4a4a;font-weight:normal;">74.943.600</div>
<div class="t" style="left:495.30px;top:301.24px;font-size:6.4px;color:#4a4a4a;font-weight:normal;">25/03/2021</div>
<div class="t" style="left:618.60px;top:301.24px;font-size:6.4px;color:#4a4a4a;font-weight:normal;">Victor Omamo</div>
<div style="position:absolute;left:706px;top:299.43px;width:7.8px;height:7.8px;border:1px solid #f2f2f2;box-sizing:border-box;background:#fff"></div>
<svg style="position:absolute;left:752.5px;top:300.33px" width="8" height="7" viewBox="0 0 8 7"><rect x="0.55" y="0.55" width="6.9" height="5.3" rx="0.6" fill="#fff8f0" stroke="#f6a456" stroke-width="0.95"/><path d="M0.9 1.1L4 3.5L7.1 1.1" fill="none" stroke="#f6a456" stroke-width="0.9"/></svg>
<svg style="position:absolute;left:782.5px;top:299.33px" width="6" height="8" viewBox="0 0 6 8"><path d="M0.5 0.5H3.3L5.1 2.3V7.3H0.5Z" fill="#fff" stroke="#ea5050" stroke-width="0.85" stroke-linejoin="round"/><path d="M3.2 0.6V2.4H5" fill="none" stroke="#ea5050" stroke-width="0.6"/><path d="M1.8 6C2.4 4.8 2.8 3.8 2.7 3.1C2.6 2.7 2.1 2.9 2.3 3.6C2.6 4.6 3.4 5.4 4 5.5" fill="none" stroke="#ea5050" stroke-width="0.55"/></svg>
<svg style="position:absolute;left:808.6px;top:300px" width="8" height="7" viewBox="0 0 8 7"><path d="M0.3 0.6H1.4M0.3 3H1.4M0.3 5.4H1.4" stroke="#5a8f5a" stroke-width="1.2"/><path d="M2.5 0.6H7.3M2.5 3H7.3M2.5 5.4H7.3" stroke="#5f925f" stroke-width="1.25"/></svg>
<svg style="position:absolute;left:831.5px;top:300.03px" width="8" height="7" viewBox="0 0 8 7"><path d="M0.5 5.8V1H2.8L3.6 1.8H6.3V2.8" fill="none" stroke="#4a9ff0" stroke-width="0.9"/><path d="M0.5 5.8L1.8 2.9H7.6L6.3 5.8Z" fill="#e3f0fd" stroke="#4a9ff0" stroke-width="0.9"/></svg>
<svg style="position:absolute;left:854.7px;top:300.43px" width="9" height="6" viewBox="0 0 9 6"><path d="M0.5 2.9C2.1 0.5 6.3 0.5 7.9 2.9C6.3 5.3 2.1 5.3 0.5 2.9Z" fill="#e8eef6" stroke="#4573aa" stroke-width="0.8"/><circle cx="4.3" cy="2.9" r="1.25" fill="#3f6fa6"/></svg>
<div style="position:absolute;left:143px;top:315.47px;width:7.5px;height:7.5px;border:1px solid #e9e9e9;border-radius:1px;box-sizing:border-box;background:#fff"></div>
<div class="t" style="left:73.00px;width:300px;text-align:center;top:317.18px;font-size:6.4px;color:#4a4a4a;font-weight:normal;">15</div>
<div class="t" style="left:334.20px;top:317.18px;font-size:6.4px;color:#4a4a4a;font-weight:normal;">USD</div>
<div class="t" style="left:105.60px;width:300px;text-align:right;top:317.18px;font-size:6.4px;color:#4a4a4a;font-weight:normal;">28.103.850</div>
<div class="t" style="left:146.80px;width:300px;text-align:right;top:317.18px;font-size:6.4px;color:#4a4a4a;font-weight:normal;">28.103.850</div>
<div class="t" style="left:188.60px;width:300px;text-align:right;top:317.18px;font-size:6.4px;color:#4a4a4a;font-weight:normal;">28.103.850</div>
<div class="t" style="left:495.30px;top:317.18px;font-size:6.4px;color:#4a4a4a;font-weight:normal;">28/05/2021</div>
<div class="t" style="left:618.60px;top:317.18px;font-size:6.4px;color:#4a4a4a;font-weight:normal;">tim tim</div>
<div style="position:absolute;left:706px;top:315.37px;width:7.8px;height:7.8px;border:1px solid #f2f2f2;box-sizing:border-box;background:#fff"></div>
<svg style="position:absolute;left:752.5px;top:316.27px" width="8" height="7" viewBox="0 0 8 7"><rect x="0.55" y="0.55" width="6.9" height="5.3" rx="0.6" fill="#fff8f0" stroke="#f6a456" stroke-width="0.95"/><path d="M0.9 1.1L4 3.5L7.1 1.1" fill="none" stroke="#f6a456" stroke-width="0.9"/></svg>
<svg style="position:absolute;left:782.5px;top:315.27px" width="6" height="8" viewBox="0 0 6 8"><path d="M0.5 0.5H3.3L5.1 2.3V7.3H0.5Z" fill="#fff" stroke="#ea5050" stroke-width="0.85" stroke-linejoin="round"/><path d="M3.2 0.6V2.4H5" fill="none" stroke="#ea5050" stroke-width="0.6"/><path d="M1.8 6C2.4 4.8 2.8 3.8 2.7 3.1C2.6 2.7 2.1 2.9 2.3 3.6C2.6 4.6 3.4 5.4 4 5.5" fill="none" stroke="#ea5050" stroke-width="0.55"/></svg>
<svg style="position:absolute;left:808.6px;top:316px" width="8" height="7" viewBox="0 0 8 7"><path d="M0.3 0.6H1.4M0.3 3H1.4M0.3 5.4H1.4" stroke="#5a8f5a" stroke-width="1.2"/><path d="M2.5 0.6H7.3M2.5 3H7.3M2.5 5.4H7.3" stroke="#5f925f" stroke-width="1.25"/></svg>
<svg style="position:absolute;left:831.5px;top:315.57px" width="8" height="8.5" viewBox="0 0 8 8.5"><rect x="0.6" y="2.2" width="4.4" height="5.6" rx="1.6" fill="#e6f4e6" stroke="#86c886" stroke-width="0.9"/><rect x="2.6" y="0.6" width="4.4" height="5.8" rx="1.6" fill="#fff" stroke="#86c886" stroke-width="0.9"/></svg>
<svg style="position:absolute;left:854.7px;top:316.37px" width="9" height="6" viewBox="0 0 9 6"><path d="M0.5 2.9C2.1 0.5 6.3 0.5 7.9 2.9C6.3 5.3 2.1 5.3 0.5 2.9Z" fill="#e8eef6" stroke="#4573aa" stroke-width="0.8"/><circle cx="4.3" cy="2.9" r="1.25" fill="#3f6fa6"/></svg>
<div style="position:absolute;left:143px;top:331.41px;width:7.5px;height:7.5px;border:1px solid #e9e9e9;border-radius:1px;box-sizing:border-box;background:#fff"></div>
<div class="t" style="left:73.00px;width:300px;text-align:center;top:333.12px;font-size:6.4px;color:#c0c0c8;font-weight:normal;">-</div>
<div class="t" style="left:334.20px;top:333.12px;font-size:6.4px;color:#4a4a4a;font-weight:normal;">ZAR</div>
<div class="t" style="left:105.60px;width:300px;text-align:right;top:333.12px;font-size:6.4px;color:#4a4a4a;font-weight:normal;">120</div>
<div class="t" style="left:146.80px;width:300px;text-align:right;top:333.12px;font-size:6.4px;color:#4a4a4a;font-weight:normal;">0</div>
<div class="t" style="left:188.60px;width:300px;text-align:right;top:333.12px;font-size:6.4px;color:#4a4a4a;font-weight:normal;">0</div>
<div class="t" style="left:495.30px;top:333.12px;font-size:6.4px;color:#4a4a4a;font-weight:normal;">24/11/2020</div>
<div class="t" style="left:429.00px;width:300px;text-align:center;top:333.12px;font-size:6.4px;color:#4a4a4a;font-weight:normal;">331200</div>
<div class="t" style="left:618.60px;top:333.12px;font-size:6.4px;color:#4a4a4a;font-weight:normal;">tim tim</div>
<div style="position:absolute;left:706px;top:331.31px;width:7.8px;height:7.8px;border:1px solid #f2f2f2;box-sizing:border-box;background:#fff"></div>
<svg style="position:absolute;left:752.5px;top:332.21px" width="8" height="7" viewBox="0 0 8 7"><rect x="0.55" y="0.55" width="6.9" height="5.3" rx="0.6" fill="#fff8f0" stroke="#f6a456" stroke-width="0.95"/><path d="M0.9 1.1L4 3.5L7.1 1.1" fill="none" stroke="#f6a456" stroke-width="0.9"/></svg>
<svg style="position:absolute;left:782.5px;top:331.21px" width="6" height="8" viewBox="0 0 6 8"><path d="M0.5 0.5H3.3L5.1 2.3V7.3H0.5Z" fill="#fff" stroke="#ea5050" stroke-width="0.85" stroke-linejoin="round"/><path d="M3.2 0.6V2.4H5" fill="none" stroke="#ea5050" stroke-width="0.6"/><path d="M1.8 6C2.4 4.8 2.8 3.8 2.7 3.1C2.6 2.7 2.1 2.9 2.3 3.6C2.6 4.6 3.4 5.4 4 5.5" fill="none" stroke="#ea5050" stroke-width="0.55"/></svg>
<svg style="position:absolute;left:808.6px;top:332px" width="8" height="7" viewBox="0 0 8 7"><path d="M0.3 0.6H1.4M0.3 3H1.4M0.3 5.4H1.4" stroke="#5a8f5a" stroke-width="1.2"/><path d="M2.5 0.6H7.3M2.5 3H7.3M2.5 5.4H7.3" stroke="#5f925f" stroke-width="1.25"/></svg>
<svg style="position:absolute;left:831.5px;top:331.51px" width="8" height="8.5" viewBox="0 0 8 8.5"><rect x="0.6" y="2.2" width="4.4" height="5.6" rx="1.6" fill="#e6f4e6" stroke="#86c886" stroke-width="0.9"/><rect x="2.6" y="0.6" width="4.4" height="5.8" rx="1.6" fill="#fff" stroke="#86c886" stroke-width="0.9"/></svg>
<svg style="position:absolute;left:854.7px;top:332.31px" width="9" height="6" viewBox="0 0 9 6"><path d="M0.5 2.9C2.1 0.5 6.3 0.5 7.9 2.9C6.3 5.3 2.1 5.3 0.5 2.9Z" fill="#e8eef6" stroke="#4573aa" stroke-width="0.8"/><circle cx="4.3" cy="2.9" r="1.25" fill="#3f6fa6"/></svg>
<div style="position:absolute;left:143px;top:347.35px;width:7.5px;height:7.5px;border:1px solid #e9e9e9;border-radius:1px;box-sizing:border-box;background:#fff"></div>
<div class="t" style="left:73.00px;width:300px;text-align:center;top:349.06px;font-size:6.4px;color:#4a4a4a;font-weight:normal;">0</div>
<div class="t" style="left:334.20px;top:349.06px;font-size:6.4px;color:#4a4a4a;font-weight:normal;">ZAR</div>
<div class="t" style="left:105.60px;width:300px;text-align:right;top:349.06px;font-size:6.4px;color:#4a4a4a;font-weight:normal;">10</div>
<div class="t" style="left:146.80px;width:300px;text-align:right;top:349.06px;font-size:6.4px;color:#4a4a4a;font-weight:normal;">10</div>
<div class="t" style="left:188.60px;width:300px;text-align:right;top:349.06px;font-size:6.4px;color:#4a4a4a;font-weight:normal;">10</div>
<div class="t" style="left:495.30px;top:349.06px;font-size:6.4px;color:#4a4a4a;font-weight:normal;">18/01/2021</div>
<div class="t" style="left:429.00px;width:300px;text-align:center;top:349.06px;font-size:6.4px;color:#4a4a4a;font-weight:normal;">331000</div>
<div class="t" style="left:618.60px;top:349.06px;font-size:6.4px;color:#4a4a4a;font-weight:normal;">Administrator</div>
<div style="position:absolute;left:706px;top:347.25px;width:7.8px;height:7.8px;border:1px solid #f2f2f2;box-sizing:border-box;background:#fff"></div>
<svg style="position:absolute;left:752.5px;top:348.15px" width="8" height="7" viewBox="0 0 8 7"><rect x="0.55" y="0.55" width="6.9" height="5.3" rx="0.6" fill="#fff8f0" stroke="#f6a456" stroke-width="0.95"/><path d="M0.9 1.1L4 3.5L7.1 1.1" fill="none" stroke="#f6a456" stroke-width="0.9"/></svg>
<svg style="position:absolute;left:782.5px;top:347.15px" width="6" height="8" viewBox="0 0 6 8"><path d="M0.5 0.5H3.3L5.1 2.3V7.3H0.5Z" fill="#fff" stroke="#ea5050" stroke-width="0.85" stroke-linejoin="round"/><path d="M3.2 0.6V2.4H5" fill="none" stroke="#ea5050" stroke-width="0.6"/><path d="M1.8 6C2.4 4.8 2.8 3.8 2.7 3.1C2.6 2.7 2.1 2.9 2.3 3.6C2.6 4.6 3.4 5.4 4 5.5" fill="none" stroke="#ea5050" stroke-width="0.55"/></svg>
<svg style="position:absolute;left:808.6px;top:348px" width="8" height="7" viewBox="0 0 8 7"><path d="M0.3 0.6H1.4M0.3 3H1.4M0.3 5.4H1.4" stroke="#5a8f5a" stroke-width="1.2"/><path d="M2.5 0.6H7.3M2.5 3H7.3M2.5 5.4H7.3" stroke="#5f925f" stroke-width="1.25"/></svg>
<svg style="position:absolute;left:831.5px;top:347.85px" width="8" height="7" viewBox="0 0 8 7"><path d="M0.5 5.8V1H2.8L3.6 1.8H6.3V2.8" fill="none" stroke="#4a9ff0" stroke-width="0.9"/><path d="M0.5 5.8L1.8 2.9H7.6L6.3 5.8Z" fill="#e3f0fd" stroke="#4a9ff0" stroke-width="0.9"/></svg>
<svg style="position:absolute;left:854.7px;top:348.25px" width="9" height="6" viewBox="0 0 9 6"><path d="M0.5 2.9C2.1 0.5 6.3 0.5 7.9 2.9C6.3 5.3 2.1 5.3 0.5 2.9Z" fill="#e8eef6" stroke="#4573aa" stroke-width="0.8"/><circle cx="4.3" cy="2.9" r="1.25" fill="#3f6fa6"/></svg>
<div style="position:absolute;left:143px;top:363.29px;width:7.5px;height:7.5px;border:1px solid #e9e9e9;border-radius:1px;box-sizing:border-box;background:#fff"></div>
<div class="t" style="left:73.00px;width:300px;text-align:center;top:365.00px;font-size:6.4px;color:#c0c0c8;font-weight:normal;">-</div>
<div class="t" style="left:334.20px;top:365.00px;font-size:6.4px;color:#4a4a4a;font-weight:normal;">ZAR</div>
<div class="t" style="left:105.60px;width:300px;text-align:right;top:365.00px;font-size:6.4px;color:#4a4a4a;font-weight:normal;">10</div>
<div class="t" style="left:146.80px;width:300px;text-align:right;top:365.00px;font-size:6.4px;color:#4a4a4a;font-weight:normal;">10</div>
<div class="t" style="left:188.60px;width:300px;text-align:right;top:365.00px;font-size:6.4px;color:#4a4a4a;font-weight:normal;">10</div>
<div class="t" style="left:495.30px;top:365.00px;font-size:6.4px;color:#4a4a4a;font-weight:normal;">18/01/2021</div>
<div class="t" style="left:429.00px;width:300px;text-align:center;top:365.00px;font-size:6.4px;color:#4a4a4a;font-weight:normal;">331000</div>
<div class="t" style="left:618.60px;top:365.00px;font-size:6.4px;color:#4a4a4a;font-weight:normal;">Administrator</div>
<div style="position:absolute;left:706px;top:363.19px;width:7.8px;height:7.8px;border:1px solid #f2f2f2;box-sizing:border-box;background:#fff"></div>
<svg style="position:absolute;left:752.5px;top:364.09px" width="8" height="7" viewBox="0 0 8 7"><rect x="0.55" y="0.55" width="6.9" height="5.3" rx="0.6" fill="#fff8f0" stroke="#f6a456" stroke-width="0.95"/><path d="M0.9 1.1L4 3.5L7.1 1.1" fill="none" stroke="#f6a456" stroke-width="0.9"/></svg>
<svg style="position:absolute;left:782.5px;top:363.09px" width="6" height="8" viewBox="0 0 6 8"><path d="M0.5 0.5H3.3L5.1 2.3V7.3H0.5Z" fill="#fff" stroke="#ea5050" stroke-width="0.85" stroke-linejoin="round"/><path d="M3.2 0.6V2.4H5" fill="none" stroke="#ea5050" stroke-width="0.6"/><path d="M1.8 6C2.4 4.8 2.8 3.8 2.7 3.1C2.6 2.7 2.1 2.9 2.3 3.6C2.6 4.6 3.4 5.4 4 5.5" fill="none" stroke="#ea5050" stroke-width="0.55"/></svg>
<svg style="position:absolute;left:808.6px;top:364px" width="8" height="7" viewBox="0 0 8 7"><path d="M0.3 0.6H1.4M0.3 3H1.4M0.3 5.4H1.4" stroke="#5a8f5a" stroke-width="1.2"/><path d="M2.5 0.6H7.3M2.5 3H7.3M2.5 5.4H7.3" stroke="#5f925f" stroke-width="1.25"/></svg>
<svg style="position:absolute;left:831.5px;top:363.79px" width="8" height="7" viewBox="0 0 8 7"><path d="M0.5 5.8V1H2.8L3.6 1.8H6.3V2.8" fill="none" stroke="#4a9ff0" stroke-width="0.9"/><path d="M0.5 5.8L1.8 2.9H7.6L6.3 5.8Z" fill="#e3f0fd" stroke="#4a9ff0" stroke-width="0.9"/></svg>
<svg style="position:absolute;left:854.7px;top:364.19px" width="9" height="6" viewBox="0 0 9 6"><path d="M0.5 2.9C2.1 0.5 6.3 0.5 7.9 2.9C6.3 5.3 2.1 5.3 0.5 2.9Z" fill="#e8eef6" stroke="#4573aa" stroke-width="0.8"/><circle cx="4.3" cy="2.9" r="1.25" fill="#3f6fa6"/></svg>
<div style="position:absolute;left:143px;top:379.23px;width:7.5px;height:7.5px;border:1px solid #e9e9e9;border-radius:1px;box-sizing:border-box;background:#fff"></div>
<div class="t" style="left:73.00px;width:300px;text-align:center;top:380.94px;font-size:6.4px;color:#c0c0c8;font-weight:normal;">-</div>
<div class="t" style="left:334.20px;top:380.94px;font-size:6.4px;color:#4a4a4a;font-weight:normal;">ZAR</div>
<div class="t" style="left:105.60px;width:300px;text-align:right;top:380.94px;font-size:6.4px;color:#4a4a4a;font-weight:normal;">1.576.345</div>
<div class="t" style="left:146.80px;width:300px;text-align:right;top:380.94px;font-size:6.4px;color:#4a4a4a;font-weight:normal;">105.090</div>
<div class="t" style="left:188.60px;width:300px;text-align:right;top:380.94px;font-size:6.4px;color:#4a4a4a;font-weight:normal;">105.090</div>
<div class="t" style="left:495.30px;top:380.94px;font-size:6.4px;color:#4a4a4a;font-weight:normal;">01/09/2020</div>
<div class="t" style="left:429.00px;width:300px;text-align:center;top:380.94px;font-size:6.4px;color:#4a4a4a;font-weight:normal;">370000</div>
<div class="t" style="left:618.60px;top:380.94px;font-size:6.4px;color:#4a4a4a;font-weight:normal;">tim tim</div>
<div style="position:absolute;left:706px;top:379.13px;width:7.8px;height:7.8px;border:1px solid #f2f2f2;box-sizing:border-box;background:#fff"></div>
<svg style="position:absolute;left:752.5px;top:380.03px" width="8" height="7" viewBox="0 0 8 7"><rect x="0.55" y="0.55" width="6.9" height="5.3" rx="0.6" fill="#fff8f0" stroke="#f6a456" stroke-width="0.95"/><path d="M0.9 1.1L4 3.5L7.1 1.1" fill="none" stroke="#f6a456" stroke-width="0.9"/></svg>
<svg style="position:absolute;left:782.5px;top:379.03px" width="6" height="8" viewBox="0 0 6 8"><path d="M0.5 0.5H3.3L5.1 2.3V7.3H0.5Z" fill="#fff" stroke="#ea5050" stroke-width="0.85" stroke-linejoin="round"/><path d="M3.2 0.6V2.4H5" fill="none" stroke="#ea5050" stroke-width="0.6"/><path d="M1.8 6C2.4 4.8 2.8 3.8 2.7 3.1C2.6 2.7 2.1 2.9 2.3 3.6C2.6 4.6 3.4 5.4 4 5.5" fill="none" stroke="#ea5050" stroke-width="0.55"/></svg>
<svg style="position:absolute;left:808.6px;top:380px" width="8" height="7" viewBox="0 0 8 7"><path d="M0.3 0.6H1.4M0.3 3H1.4M0.3 5.4H1.4" stroke="#5a8f5a" stroke-width="1.2"/><path d="M2.5 0.6H7.3M2.5 3H7.3M2.5 5.4H7.3" stroke="#5f925f" stroke-width="1.25"/></svg>
<svg style="position:absolute;left:831.5px;top:379.73px" width="8" height="7" viewBox="0 0 8 7"><path d="M0.5 5.8V1H2.8L3.6 1.8H6.3V2.8" fill="none" stroke="#4a9ff0" stroke-width="0.9"/><path d="M0.5 5.8L1.8 2.9H7.6L6.3 5.8Z" fill="#e3f0fd" stroke="#4a9ff0" stroke-width="0.9"/></svg>
<svg style="position:absolute;left:854.7px;top:380.13px" width="9" height="6" viewBox="0 0 9 6"><path d="M0.5 2.9C2.1 0.5 6.3 0.5 7.9 2.9C6.3 5.3 2.1 5.3 0.5 2.9Z" fill="#e8eef6" stroke="#4573aa" stroke-width="0.8"/><circle cx="4.3" cy="2.9" r="1.25" fill="#3f6fa6"/></svg>
<div style="position:absolute;left:143px;top:395.17px;width:7.5px;height:7.5px;border:1px solid #e9e9e9;border-radius:1px;box-sizing:border-box;background:#fff"></div>
<div class="t" style="left:73.00px;width:300px;text-align:center;top:396.88px;font-size:6.4px;color:#c0c0c8;font-weight:normal;">-</div>
<div class="t" style="left:334.20px;top:396.88px;font-size:6.4px;color:#4a4a4a;font-weight:normal;">ZAR</div>
<div class="t" style="left:105.60px;width:300px;text-align:right;top:396.88px;font-size:6.4px;color:#4a4a4a;font-weight:normal;">14.500</div>
<div class="t" style="left:146.80px;width:300px;text-align:right;top:396.88px;font-size:6.4px;color:#4a4a4a;font-weight:normal;">0</div>
<div class="t" style="left:188.60px;width:300px;text-align:right;top:396.88px;font-size:6.4px;color:#4a4a4a;font-weight:normal;">0</div>
<div class="t" style="left:429.00px;width:300px;text-align:center;top:396.88px;font-size:6.4px;color:#4a4a4a;font-weight:normal;">330900</div>
<div class="t" style="left:618.60px;top:396.88px;font-size:6.4px;color:#4a4a4a;font-weight:normal;">Sam van Gisbergen</div>
<div style="position:absolute;left:706px;top:395.07px;width:7.8px;height:7.8px;border:1px solid #f2f2f2;box-sizing:border-box;background:#fff"></div>
<svg style="position:absolute;left:752.5px;top:395.97px" width="8" height="7" viewBox="0 0 8 7"><rect x="0.55" y="0.55" width="6.9" height="5.3" rx="0.6" fill="#fff8f0" stroke="#f6a456" stroke-width="0.95"/><path d="M0.9 1.1L4 3.5L7.1 1.1" fill="none" stroke="#f6a456" stroke-width="0.9"/></svg>
<svg style="position:absolute;left:782.5px;top:394.97px" width="6" height="8" viewBox="0 0 6 8"><path d="M0.5 0.5H3.3L5.1 2.3V7.3H0.5Z" fill="#fff" stroke="#ea5050" stroke-width="0.85" stroke-linejoin="round"/><path d="M3.2 0.6V2.4H5" fill="none" stroke="#ea5050" stroke-width="0.6"/><path d="M1.8 6C2.4 4.8 2.8 3.8 2.7 3.1C2.6 2.7 2.1 2.9 2.3 3.6C2.6 4.6 3.4 5.4 4 5.5" fill="none" stroke="#ea5050" stroke-width="0.55"/></svg>
<svg style="position:absolute;left:808.6px;top:396px" width="8" height="7" viewBox="0 0 8 7"><path d="M0.3 0.6H1.4M0.3 3H1.4M0.3 5.4H1.4" stroke="#5a8f5a" stroke-width="1.2"/><path d="M2.5 0.6H7.3M2.5 3H7.3M2.5 5.4H7.3" stroke="#5f925f" stroke-width="1.25"/></svg>
<svg style="position:absolute;left:831.5px;top:395.67px" width="8" height="7" viewBox="0 0 8 7"><path d="M0.5 5.8V1H2.8L3.6 1.8H6.3V2.8" fill="none" stroke="#4a9ff0" stroke-width="0.9"/><path d="M0.5 5.8L1.8 2.9H7.6L6.3 5.8Z" fill="#e3f0fd" stroke="#4a9ff0" stroke-width="0.9"/></svg>
<svg style="position:absolute;left:854.7px;top:396.07px" width="9" height="6" viewBox="0 0 9 6"><path d="M0.5 2.9C2.1 0.5 6.3 0.5 7.9 2.9C6.3 5.3 2.1 5.3 0.5 2.9Z" fill="#e8eef6" stroke="#4573aa" stroke-width="0.8"/><circle cx="4.3" cy="2.9" r="1.25" fill="#3f6fa6"/></svg>
<div style="position:absolute;left:143px;top:411.11px;width:7.5px;height:7.5px;border:1px solid #e9e9e9;border-radius:1px;box-sizing:border-box;background:#fff"></div>
<div class="t" style="left:73.00px;width:300px;text-align:center;top:412.82px;font-size:6.4px;color:#4a4a4a;font-weight:normal;">0</div>
<div style="position:absolute;left:164px;top:412.82px;width:3px;overflow:hidden;height:8px"><div class="t" style="left:-2.3px;top:0;font-size:6.4px;color:#4a4a4a">0</div></div>
<div class="t" style="left:334.20px;top:412.82px;font-size:6.4px;color:#4a4a4a;font-weight:normal;">ZAR</div>
<div class="t" style="left:105.60px;width:300px;text-align:right;top:412.82px;font-size:6.4px;color:#4a4a4a;font-weight:normal;">60.000</div>
<div class="t" style="left:146.80px;width:300px;text-align:right;top:412.82px;font-size:6.4px;color:#4a4a4a;font-weight:normal;">60.000</div>
<div class="t" style="left:188.60px;width:300px;text-align:right;top:412.82px;font-size:6.4px;color:#4a4a4a;font-weight:normal;">60.000</div>
<div class="t" style="left:495.30px;top:412.82px;font-size:6.4px;color:#4a4a4a;font-weight:normal;">16/06/2020</div>
<div class="t" style="left:618.60px;top:412.82px;font-size:6.4px;color:#4a4a4a;font-weight:normal;">tim tim</div>
<div style="position:absolute;left:706px;top:411.01px;width:7.8px;height:7.8px;border:1px solid #f2f2f2;box-sizing:border-box;background:#fff"></div>
<svg style="position:absolute;left:752.5px;top:411.91px" width="8" height="7" viewBox="0 0 8 7"><rect x="0.55" y="0.55" width="6.9" height="5.3" rx="0.6" fill="#fff8f0" stroke="#f6a456" stroke-width="0.95"/><path d="M0.9 1.1L4 3.5L7.1 1.1" fill="none" stroke="#f6a456" stroke-width="0.9"/></svg>
<svg style="position:absolute;left:782.5px;top:410.91px" width="6" height="8" viewBox="0 0 6 8"><path d="M0.5 0.5H3.3L5.1 2.3V7.3H0.5Z" fill="#fff" stroke="#ea5050" stroke-width="0.85" stroke-linejoin="round"/><path d="M3.2 0.6V2.4H5" fill="none" stroke="#ea5050" stroke-width="0.6"/><path d="M1.8 6C2.4 4.8 2.8 3.8 2.7 3.1C2.6 2.7 2.1 2.9 2.3 3.6C2.6 4.6 3.4 5.4 4 5.5" fill="none" stroke="#ea5050" stroke-width="0.55"/></svg>
<svg style="position:absolute;left:808.6px;top:412px" width="8" height="7" viewBox="0 0 8 7"><path d="M0.3 0.6H1.4M0.3 3H1.4M0.3 5.4H1.4" stroke="#5a8f5a" stroke-width="1.2"/><path d="M2.5 0.6H7.3M2.5 3H7.3M2.5 5.4H7.3" stroke="#5f925f" stroke-width="1.25"/></svg>
<svg style="position:absolute;left:831.5px;top:411.61px" width="8" height="7" viewBox="0 0 8 7"><path d="M0.5 5.8V1H2.8L3.6 1.8H6.3V2.8" fill="none" stroke="#4a9ff0" stroke-width="0.9"/><path d="M0.5 5.8L1.8 2.9H7.6L6.3 5.8Z" fill="#e3f0fd" stroke="#4a9ff0" stroke-width="0.9"/></svg>
<svg style="position:absolute;left:854.7px;top:412.01px" width="9" height="6" viewBox="0 0 9 6"><path d="M0.5 2.9C2.1 0.5 6.3 0.5 7.9 2.9C6.3 5.3 2.1 5.3 0.5 2.9Z" fill="#e8eef6" stroke="#4573aa" stroke-width="0.8"/><circle cx="4.3" cy="2.9" r="1.25" fill="#3f6fa6"/></svg>
<div style="position:absolute;left:143px;top:427.05px;width:7.5px;height:7.5px;border:1px solid #e9e9e9;border-radius:1px;box-sizing:border-box;background:#fff"></div>
<div class="t" style="left:73.00px;width:300px;text-align:center;top:428.76px;font-size:6.4px;color:#4a4a4a;font-weight:normal;">0</div>
<div class="t" style="left:334.20px;top:428.76px;font-size:6.4px;color:#4a4a4a;font-weight:normal;">ZAR</div>
<div class="t" style="left:105.60px;width:300px;text-align:right;top:428.76px;font-size:6.4px;color:#4a4a4a;font-weight:normal;">600</div>
<div class="t" style="left:146.80px;width:300px;text-align:right;top:428.76px;font-size:6.4px;color:#4a4a4a;font-weight:normal;">600</div>
<div class="t" style="left:188.60px;width:300px;text-align:right;top:428.76px;font-size:6.4px;color:#4a4a4a;font-weight:normal;">600</div>
<div class="t" style="left:495.30px;top:428.76px;font-size:6.4px;color:#4a4a4a;font-weight:normal;">15/06/2020</div>
<div class="t" style="left:618.60px;top:428.76px;font-size:6.4px;color:#4a4a4a;font-weight:normal;">tim tim</div>
<div style="position:absolute;left:706px;top:426.95px;width:7.8px;height:7.8px;border:1px solid #f2f2f2;box-sizing:border-box;background:#fff"></div>
<svg style="position:absolute;left:752.5px;top:427.85px" width="8" height="7" viewBox="0 0 8 7"><rect x="0.55" y="0.55" width="6.9" height="5.3" rx="0.6" fill="#fff8f0" stroke="#f6a456" stroke-width="0.95"/><path d="M0.9 1.1L4 3.5L7.1 1.1" fill="none" stroke="#f6a456" stroke-width="0.9"/></svg>
<svg style="position:absolute;left:782.5px;top:426.85px" width="6" height="8" viewBox="0 0 6 8"><path d="M0.5 0.5H3.3L5.1 2.3V7.3H0.5Z" fill="#fff" stroke="#ea5050" stroke-width="0.85" stroke-linejoin="round"/><path d="M3.2 0.6V2.4H5" fill="none" stroke="#ea5050" stroke-width="0.6"/><path d="M1.8 6C2.4 4.8 2.8 3.8 2.7 3.1C2.6 2.7 2.1 2.9 2.3 3.6C2.6 4.6 3.4 5.4 4 5.5" fill="none" stroke="#ea5050" stroke-width="0.55"/></svg>
<svg style="position:absolute;left:808.6px;top:428px" width="8" height="7" viewBox="0 0 8 7"><path d="M0.3 0.6H1.4M0.3 3H1.4M0.3 5.4H1.4" stroke="#5a8f5a" stroke-width="1.2"/><path d="M2.5 0.6H7.3M2.5 3H7.3M2.5 5.4H7.3" stroke="#5f925f" stroke-width="1.25"/></svg>
<svg style="position:absolute;left:831.5px;top:427.55px" width="8" height="7" viewBox="0 0 8 7"><path d="M0.5 5.8V1H2.8L3.6 1.8H6.3V2.8" fill="none" stroke="#4a9ff0" stroke-width="0.9"/><path d="M0.5 5.8L1.8 2.9H7.6L6.3 5.8Z" fill="#e3f0fd" stroke="#4a9ff0" stroke-width="0.9"/></svg>
<svg style="position:absolute;left:854.7px;top:427.95px" width="9" height="6" viewBox="0 0 9 6"><path d="M0.5 2.9C2.1 0.5 6.3 0.5 7.9 2.9C6.3 5.3 2.1 5.3 0.5 2.9Z" fill="#e8eef6" stroke="#4573aa" stroke-width="0.8"/><circle cx="4.3" cy="2.9" r="1.25" fill="#3f6fa6"/></svg>
<div style="position:absolute;left:143px;top:442.99px;width:7.5px;height:7.5px;border:1px solid #e9e9e9;border-radius:1px;box-sizing:border-box;background:#fff"></div>
<div class="t" style="left:73.00px;width:300px;text-align:center;top:444.70px;font-size:6.4px;color:#4a4a4a;font-weight:normal;">0</div>
<div class="t" style="left:334.20px;top:444.70px;font-size:6.4px;color:#4a4a4a;font-weight:normal;">ZAR</div>
<div class="t" style="left:105.60px;width:300px;text-align:right;top:444.70px;font-size:6.4px;color:#4a4a4a;font-weight:normal;">480.000</div>
<div class="t" style="left:146.80px;width:300px;text-align:right;top:444.70px;font-size:6.4px;color:#4a4a4a;font-weight:normal;">240.000</div>
<div class="t" style="left:188.60px;width:300px;text-align:right;top:444.70px;font-size:6.4px;color:#4a4a4a;font-weight:normal;">240.000</div>
<div class="t" style="left:495.30px;top:444.70px;font-size:6.4px;color:#4a4a4a;font-weight:normal;">18/01/2021</div>
<div class="t" style="left:429.00px;width:300px;text-align:center;top:444.70px;font-size:6.4px;color:#4a4a4a;font-weight:normal;">320300</div>
<div class="t" style="left:618.60px;top:444.70px;font-size:6.4px;color:#4a4a4a;font-weight:normal;">Hassan Shahin</div>
<div style="position:absolute;left:706px;top:442.89px;width:7.8px;height:7.8px;border:1px solid #f2f2f2;box-sizing:border-box;background:#fff"></div>
<svg style="position:absolute;left:752.5px;top:443.79px" width="8" height="7" viewBox="0 0 8 7"><rect x="0.55" y="0.55" width="6.9" height="5.3" rx="0.6" fill="#fff8f0" stroke="#f6a456" stroke-width="0.95"/><path d="M0.9 1.1L4 3.5L7.1 1.1" fill="none" stroke="#f6a456" stroke-width="0.9"/></svg>
<svg style="position:absolute;left:782.5px;top:442.79px" width="6" height="8" viewBox="0 0 6 8"><path d="M0.5 0.5H3.3L5.1 2.3V7.3H0.5Z" fill="#fff" stroke="#ea5050" stroke-width="0.85" stroke-linejoin="round"/><path d="M3.2 0.6V2.4H5" fill="none" stroke="#ea5050" stroke-width="0.6"/><path d="M1.8 6C2.4 4.8 2.8 3.8 2.7 3.1C2.6 2.7 2.1 2.9 2.3 3.6C2.6 4.6 3.4 5.4 4 5.5" fill="none" stroke="#ea5050" stroke-width="0.55"/></svg>
<svg style="position:absolute;left:808.6px;top:444px" width="8" height="7" viewBox="0 0 8 7"><path d="M0.3 0.6H1.4M0.3 3H1.4M0.3 5.4H1.4" stroke="#5a8f5a" stroke-width="1.2"/><path d="M2.5 0.6H7.3M2.5 3H7.3M2.5 5.4H7.3" stroke="#5f925f" stroke-width="1.25"/></svg>
<svg style="position:absolute;left:831.5px;top:443.09px" width="8" height="8.5" viewBox="0 0 8 8.5"><rect x="0.6" y="2.2" width="4.4" height="5.6" rx="1.6" fill="#e6f4e6" stroke="#86c886" stroke-width="0.9"/><rect x="2.6" y="0.6" width="4.4" height="5.8" rx="1.6" fill="#fff" stroke="#86c886" stroke-width="0.9"/></svg>
<svg style="position:absolute;left:854.7px;top:443.89px" width="9" height="6" viewBox="0 0 9 6"><path d="M0.5 2.9C2.1 0.5 6.3 0.5 7.9 2.9C6.3 5.3 2.1 5.3 0.5 2.9Z" fill="#e8eef6" stroke="#4573aa" stroke-width="0.8"/><circle cx="4.3" cy="2.9" r="1.25" fill="#3f6fa6"/></svg>
<svg style="position:absolute;left:689.7px;top:258.7px" width="8" height="10" viewBox="0 0 8 10"><path d="M0.6 0.6V7.9L2.4 6.3L3.7 9.1L4.9 8.6L3.7 5.8H6.3Z" fill="#fff" stroke="#555" stroke-width="0.85" stroke-linejoin="round"/></svg>
<div style="position:absolute;left:741.6px;top:119.1px;width:29.8px;height:332px;border:2px solid #e83c40;border-radius:3px;box-sizing:border-box"></div>
<div style="position:absolute;left:0px;top:32px;width:108px;height:422px;background:#fff"></div>
<div style="position:absolute;left:108px;top:32px;width:1px;height:422px;background:#e8e8e8"></div>
<div class="t" style="left:6.70px;top:39.80px;font-size:8.5px;color:#7a7a7a;font-weight:normal;">Support Demo</div>
<div class="t" style="left:7.00px;top:50.92px;font-size:6.0px;color:#888;font-weight:normal;">Asamco B.V.</div>
<div class="t" style="left:17.00px;top:68.84px;font-size:6.1px;color:#555;font-weight:normal;-webkit-text-stroke:0.12px #5a5a5a">Dashboard</div>
<svg style="position:absolute;left:6.8px;top:68.9px" width="8" height="7" viewBox="0 0 8 7"><rect x="0.5" y="0.5" width="6.4" height="5.6" rx="2.2" fill="none" stroke="#666" stroke-width="0.8"/><path d="M1.9 4.6A1.8 1.8 0 0 1 5.5 4.6" fill="none" stroke="#666" stroke-width="0.7"/><path d="M3.7 4.5L4.7 2.5" stroke="#666" stroke-width="0.7"/></svg>
<div class="t" style="left:15.00px;top:88.84px;font-size:6.1px;color:#555;font-weight:normal;-webkit-text-stroke:0.12px #5a5a5a">My approvals</div>
<svg style="position:absolute;left:97.8px;top:88.6px" width="4" height="6" viewBox="0 0 4 6"><path d="M0.6 0.5L3.2 3L0.6 5.5" fill="none" stroke="#666" stroke-width="0.8"/></svg>
<div class="t" style="left:15.00px;top:109.24px;font-size:6.1px;color:#555;font-weight:normal;-webkit-text-stroke:0.12px #5a5a5a">Documents</div>
<svg style="position:absolute;left:96px;top:109.9px" width="6" height="4" viewBox="0 0 6 4"><path d="M0.5 0.6L3 3.2L5.5 0.6" fill="none" stroke="#666" stroke-width="0.8"/></svg>
<div class="t" style="left:23.00px;top:129.44px;font-size:6.1px;color:#555;font-weight:normal;-webkit-text-stroke:0.12px #5a5a5a">Draft</div>
<svg style="position:absolute;left:12.5px;top:128.9px" width="8" height="7" viewBox="0 0 8 7"><circle cx="3" cy="1.9" r="1.45" fill="none" stroke="#666" stroke-width="0.85"/><path d="M0.6 6.4V5.8A2.4 2 0 0 1 4.6 4.6" fill="none" stroke="#666" stroke-width="0.85"/><path d="M4.6 6.2L7.4 3" stroke="#666" stroke-width="0.85"/><path d="M0.6 6.4H3.6" stroke="#888" stroke-width="0.7"/></svg>
<div class="t" style="left:23.00px;top:149.64px;font-size:6.1px;color:#555;font-weight:normal;-webkit-text-stroke:0.12px #5a5a5a">Purchase order</div>
<svg style="position:absolute;left:12.8px;top:148.8px" width="7" height="7" viewBox="0 0 7 7"><path d="M0 0.8H1.2L2.2 4.5H6L6.8 1.8H1.6" fill="none" stroke="#42a5f5" stroke-width="0.9"/><circle cx="2.6" cy="5.9" r="0.7" fill="#42a5f5"/><circle cx="5.5" cy="5.9" r="0.7" fill="#42a5f5"/></svg>
<div class="t" style="left:23.00px;top:169.84px;font-size:6.1px;color:#555;font-weight:normal;-webkit-text-stroke:0.12px #5a5a5a">SalesOrder</div>
<svg style="position:absolute;left:12.5px;top:169.0px" width="7" height="7" viewBox="0 0 7 7"><rect x="0.3" y="2.5" width="6.4" height="4" rx="0.5" fill="#b06a88"/><rect x="1.3" y="0.3" width="3.5" height="2.6" fill="#8a3a5a"/><rect x="1.3" y="3.8" width="4.4" height="1.3" fill="#d8a8bf"/></svg>
<div class="t" style="left:23.00px;top:190.04px;font-size:6.1px;color:#555;font-weight:normal;-webkit-text-stroke:0.12px #5a5a5a">Credit note</div>
<svg style="position:absolute;left:12.5px;top:189.2px" width="7" height="7" viewBox="0 0 7 7"><rect x="0.3" y="2.5" width="6.4" height="4" rx="0.5" fill="#6f9aa8"/><rect x="1.3" y="0.3" width="3.5" height="2.6" fill="#4f7f8f"/><rect x="1.3" y="3.8" width="4.4" height="1.3" fill="#cfe0e6"/></svg>
<div class="t" style="left:23.00px;top:210.04px;font-size:6.1px;color:#555;font-weight:normal;-webkit-text-stroke:0.12px #5a5a5a">Expense claim</div>
<svg style="position:absolute;left:12.5px;top:209.39999999999998px" width="7.5" height="6" viewBox="0 0 7.5 6"><rect x="0" y="0" width="7.5" height="6" rx="0.8" fill="#ffb066"/><rect x="0" y="1.6" width="7.5" height="1.1" fill="#fff5e8"/></svg>
<div class="t" style="left:23.00px;top:230.24px;font-size:6.1px;color:#555;font-weight:normal;-webkit-text-stroke:0.12px #5a5a5a">Return to supplier</div>
<svg style="position:absolute;left:12.5px;top:229.6px" width="8" height="6.8" viewBox="0 0 8 6.8"><path d="M0.5 0.6H4.8V4.8H0.5Z" fill="#d9ecfc" stroke="#42a0f0" stroke-width="0.85"/><path d="M4.8 2H6.6L7.6 3.4V4.8H4.8" fill="#d9ecfc" stroke="#42a0f0" stroke-width="0.85"/><circle cx="2" cy="5.4" r="1" fill="#fff" stroke="#42a0f0" stroke-width="0.7"/><circle cx="6" cy="5.4" r="1" fill="#fff" stroke="#42a0f0" stroke-width="0.7"/></svg>
<div class="t" style="left:23.00px;top:250.44px;font-size:6.1px;color:#555;font-weight:normal;-webkit-text-stroke:0.12px #5a5a5a">Pending orders</div>
<svg style="position:absolute;left:12.4px;top:249.8px" width="8" height="7" viewBox="0 0 8 7"><path d="M3.8 0.6L6.8 5H0.8Z" fill="none" stroke="#555" stroke-width="0.85" stroke-linejoin="round"/><path d="M0.2 6.2H7.6" stroke="#666" stroke-width="1"/><path d="M2.2 3.9H5.4" stroke="#555" stroke-width="0.6"/></svg>
<div class="t" style="left:23.00px;top:270.64px;font-size:6.1px;color:#555;font-weight:normal;-webkit-text-stroke:0.12px #5a5a5a">History</div>
<svg style="position:absolute;left:12.4px;top:270px" width="7" height="6.5" viewBox="0 0 7 6.5"><path d="M1.4 1.6A2.7 2.7 0 1 1 1.6 5.2" fill="none" stroke="#555" stroke-width="0.85"/><path d="M0.4 0.5L1.4 1.9L2.8 1.1" fill="none" stroke="#555" stroke-width="0.75"/><path d="M3.7 1.8V3.4L4.8 4.2" fill="none" stroke="#555" stroke-width="0.75"/></svg>
<div class="t" style="left:23.00px;top:290.54px;font-size:6.1px;color:#555;font-weight:normal;-webkit-text-stroke:0.12px #5a5a5a">Rejected</div>
<svg style="position:absolute;left:12.3px;top:289.6px" width="8" height="7" viewBox="0 0 8 7"><rect x="1.6" y="0.5" width="4.8" height="4.8" fill="none" stroke="#555" stroke-width="0.85"/><path d="M0.3 6.3H7.7" stroke="#777" stroke-width="1.2"/><path d="M3 2.4H5M4 1.4V3.6" stroke="#555" stroke-width="0.65"/></svg>
<div class="t" style="left:15.00px;top:311.64px;font-size:6.1px;color:#555;font-weight:normal;-webkit-text-stroke:0.12px #5a5a5a">Payments and Debits</div>
<svg style="position:absolute;left:97.8px;top:311.40000000000003px" width="4" height="6" viewBox="0 0 4 6"><path d="M0.6 0.5L3.2 3L0.6 5.5" fill="none" stroke="#666" stroke-width="0.8"/></svg>
<div class="t" style="left:15.00px;top:331.64px;font-size:6.1px;color:#555;font-weight:normal;-webkit-text-stroke:0.12px #5a5a5a">Supplier request</div>
<svg style="position:absolute;left:97.8px;top:331.40000000000003px" width="4" height="6" viewBox="0 0 4 6"><path d="M0.6 0.5L3.2 3L0.6 5.5" fill="none" stroke="#666" stroke-width="0.8"/></svg>
<div class="t" style="left:17.20px;top:351.84px;font-size:6.1px;color:#555;font-weight:normal;-webkit-text-stroke:0.12px #5a5a5a">Advanced procurement</div>
<svg style="position:absolute;left:97.8px;top:351.6px" width="4" height="6" viewBox="0 0 4 6"><path d="M0.6 0.5L3.2 3L0.6 5.5" fill="none" stroke="#666" stroke-width="0.8"/></svg>
<svg style="position:absolute;left:6.3px;top:351.3px" width="8" height="7.5" viewBox="0 0 8 7.5"><path d="M2.3 2.6L3.9 0.7L5.4 2.6M6.2 3.6L7.2 5.9H5.1M3 6.6H0.7L1.7 4.1" fill="none" stroke="#555" stroke-width="0.85" stroke-linejoin="round"/></svg>
<div class="t" style="left:17.20px;top:372.34px;font-size:6.1px;color:#555;font-weight:normal;-webkit-text-stroke:0.12px #5a5a5a">delegates</div>
<svg style="position:absolute;left:6.5px;top:371.9px" width="9" height="6.8" viewBox="0 0 9 6.8"><circle cx="2.9" cy="1.8" r="1.4" fill="none" stroke="#555" stroke-width="0.85"/><path d="M0.5 6.3V5.6A2.2 1.8 0 0 1 5.3 5.6V6.3Z" fill="none" stroke="#555" stroke-width="0.85"/><circle cx="6.2" cy="2.1" r="1.1" fill="none" stroke="#555" stroke-width="0.75"/><path d="M6.3 4.3A1.8 1.8 0 0 1 8.2 6.2" fill="none" stroke="#555" stroke-width="0.75"/></svg>
<div class="t" style="left:17.20px;top:392.44px;font-size:6.1px;color:#555;font-weight:normal;-webkit-text-stroke:0.12px #5a5a5a">Admin settings</div>
<svg style="position:absolute;left:97.8px;top:392.20000000000005px" width="4" height="6" viewBox="0 0 4 6"><path d="M0.6 0.5L3.2 3L0.6 5.5" fill="none" stroke="#666" stroke-width="0.8"/></svg>
<svg style="position:absolute;left:6.5px;top:392px" width="7" height="6.2" viewBox="0 0 7 6.2"><rect x="0.5" y="2" width="6" height="3.8" rx="0.4" fill="none" stroke="#555" stroke-width="0.85"/><path d="M2.1 2V0.9H4.9V2M0.5 3.7H6.5" fill="none" stroke="#555" stroke-width="0.75"/></svg>
<div class="t" style="left:17.20px;top:412.34px;font-size:6.1px;color:#555;font-weight:normal;-webkit-text-stroke:0.12px #5a5a5a">Reporting</div>
<svg style="position:absolute;left:6.6px;top:410.9px" width="6" height="7" viewBox="0 0 6 7"><path d="M0.5 0.5H3.5L5.2 2.2V6.5H0.5Z" fill="none" stroke="#555" stroke-width="0.85" stroke-linejoin="round"/><path d="M3.4 0.6V2.3H5.1" fill="none" stroke="#555" stroke-width="0.6"/></svg>
<div style="position:absolute;left:93.6px;top:127.9px;width:6.5px;height:6.6px;background:#14891c;border-radius:1.6px"></div>
<div class="t" style="left:-53.15px;width:300px;text-align:center;top:129.61px;font-size:4.6px;color:#e8ffe0;font-weight:bold;">0</div>
<div style="position:absolute;left:0px;top:303.5px;width:108px;height:1px;background:#e8e8e8"></div>
<div class="t" style="left:19.00px;top:439.17px;font-size:10.2px;color:#1b4f86;font-weight:bold;transform:scaleX(0.56);transform-origin:0 0;letter-spacing:1.6px">ASAMCO B.V.</div>
<svg style="position:absolute;left:68px;top:430px" width="26" height="22" viewBox="0 0 26 22"><circle cx="11.7" cy="11.3" r="5.7" fill="#e39a4a"/><path d="M5 16.2L10.8 10.2L10.2 8.6L11.9 8.2L13.2 9.4L12.6 11.8L18.4 16.2L14.4 15.4L11.7 13.2L9 15.4Z" fill="#fff"/><path d="M8.2 18.6Q11.7 11.8 15.2 18.6Q11.7 19.6 8.2 18.6Z" fill="#e39a4a"/><path d="M6.6 4.2C4.6 7 4.2 12.5 7.2 17.4M16.8 4.2C18.8 7 19.2 12.5 16.2 17.4" fill="none" stroke="#1b4f86" stroke-width="1.2"/><path d="M5.6 7L4.2 6M5 10L3.4 9.4M5.2 13L3.6 13M6.2 15.6L4.8 16.4M17.8 7L19.2 6M18.4 10L20 9.4M18.2 13L19.8 13M17.2 15.6L18.6 16.4" stroke="#1b4f86" stroke-width="1"/></svg>
<div style="position:absolute;left:892px;top:32px;width:8px;height:422px;background:#f1f1f1"></div>
<div style="position:absolute;left:893px;top:40px;width:6px;height:305px;background:#c1c1c1"></div>
<svg style="position:absolute;left:894.3px;top:35.2px" width="3.4" height="2.2" viewBox="0 0 3.4 2.2"><path d="M0 2.2H3.4L1.7 0Z" fill="#8a8a8a"/></svg>
<svg style="position:absolute;left:894.3px;top:448.5px" width="3.4" height="2.2" viewBox="0 0 3.4 2.2"><path d="M0 0H3.4L1.7 2.2Z" fill="#505050"/></svg>
<div style="position:absolute;left:0px;top:0px;width:900px;height:32px;background:#46545e;box-shadow:0 2px 5px rgba(0,0,0,0.3)"></div>
<svg style="position:absolute;left:12px;top:12px" width="8" height="7" viewBox="0 0 8 7"><path d="M0 1.2H7.4M0 3.4H7.4M0 5.7H7.4" stroke="#fff" stroke-width="1.1"/></svg>
<svg style="position:absolute;left:33.6px;top:12.3px" width="10" height="6.5" viewBox="0 0 10 6.5"><path d="M3.1 0.8H2.4A1.6 1.7 0 0 0 0.8 2.5V4A1.6 1.7 0 0 0 2.4 5.7H3.1" fill="none" stroke="#fff" stroke-width="1.2"/><path d="M3.7 3.25H8.1M6.1 1.2L8.1 3.25L6.1 5.3" fill="none" stroke="#fff" stroke-width="1.2"/></svg>
<svg style="position:absolute;left:56.8px;top:11.4px" width="8" height="8.5" viewBox="0 0 8 8.5"><path d="M0.6 6.2C1.6 5.4 1.8 4.6 1.8 3.4A2.2 2.3 0 0 1 6.2 3.4C6.2 4.6 6.4 5.4 7.4 6.2Z" fill="none" stroke="#fff" stroke-width="0.9"/><path d="M3.1 7.3H4.9" stroke="#fff" stroke-width="1.1"/><path d="M4 0.3V1.1" stroke="#fff" stroke-width="0.9"/></svg>
</body></html>
